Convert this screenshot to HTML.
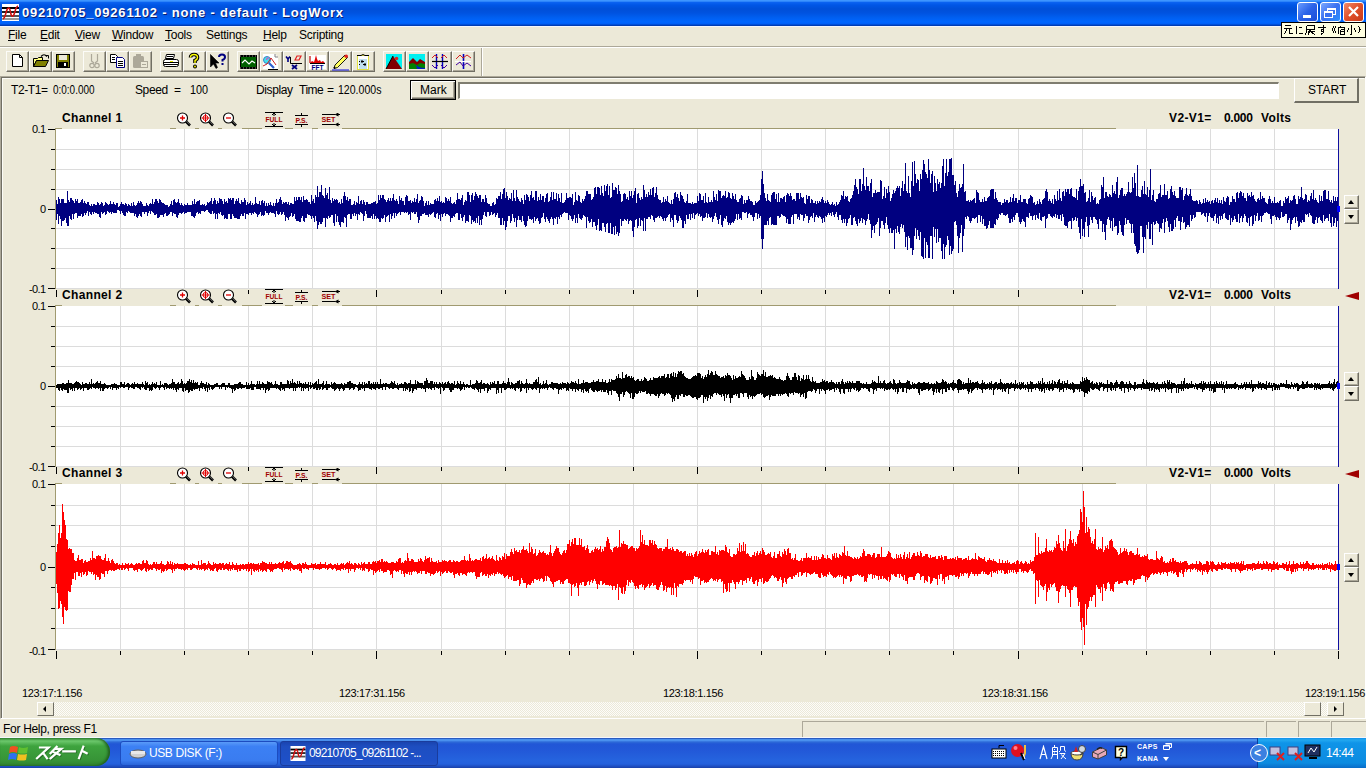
<!DOCTYPE html>
<html><head><meta charset="utf-8">
<style>
*{box-sizing:border-box;margin:0;padding:0}
html,body{width:1366px;height:768px;overflow:hidden;background:#ece9d8;font-family:"Liberation Sans",sans-serif;font-size:12px;color:#000;position:relative}
.a{position:absolute}
.t{position:absolute;white-space:nowrap;line-height:1}
#title{left:0;top:0;width:1366px;height:26px;background:linear-gradient(#3d95ff 0,#3d95ff 1px,#0a62f0 2.5px,#0056e6 5px,#004fd8 9px,#0053e0 13px,#0060f2 18px,#0066ff 22px,#005ef4 24px,#0040c0 25px,#003aa8 26px)}
#title .tt{left:22px;top:6px;color:#fff;font-weight:bold;font-size:13px;letter-spacing:0.8px;text-shadow:1px 1px 0 #0a1d72}
.tbtn{position:absolute;top:2px;width:21px;height:20px;border:1px solid #fff;border-radius:3px;background:linear-gradient(135deg,#6a9cff,#2a62e8 50%,#1c4ed8)}
.menu .t{top:29px;font-size:12px;letter-spacing:-0.25px}
.u{text-decoration:underline}
.btn{position:absolute;top:51px;width:23px;height:21px;border-top:1px solid #fcfcf8;border-left:1px solid #fcfcf8;border-right:1px solid #716f64;border-bottom:1px solid #716f64;box-shadow:inset -1px -1px 0 #aca899}
.ico{position:absolute;left:3px;top:2px}
.gl{position:absolute;background:#d8d8d8}
.ylab{position:absolute;font-size:11px;text-align:right;width:30.6px;line-height:1;letter-spacing:-0.6px}
.chh{position:absolute;font-weight:bold;font-size:12px;line-height:1;letter-spacing:0.35px}
.vv{position:absolute;font-weight:bold;font-size:12px;line-height:1;left:1168px}
.mg{position:absolute}
</style></head><body>
<!-- title bar -->
<div id="title" class="a">
  <svg class="a" style="left:2px;top:4px" width="17" height="17" viewBox="0 0 17 17"><rect width="17" height="17" fill="#fff"/><rect y="3" width="17" height="2" fill="#000"/><rect y="7" width="17" height="2" fill="#222"/><rect y="11" width="17" height="2" fill="#555"/><rect y="14" width="17" height="2" fill="#999"/><path d="M1 15 C4 14 4 3 7 4 C9 5 8 13 11 12 C13 11 13 3 16 2" stroke="#d01010" stroke-width="1.6" fill="none"/></svg>
  <div class="t tt">09210705_09261102 - none - default - LogWorx</div>
  <div class="tbtn" style="left:1297px"><div class="a" style="left:5px;top:12px;width:8px;height:3px;background:#fff"></div></div>
  <div class="tbtn" style="left:1320px;background:linear-gradient(135deg,#7aa8ff,#3a70f0 50%,#2a90ff)"><div class="a" style="left:6px;top:5px;width:9px;height:7px;border:1px solid #fff;border-top-width:2px"></div><div class="a" style="left:3px;top:8px;width:9px;height:7px;border:1px solid #fff;border-top-width:2px;background:#3a70f0"></div></div>
  <div class="tbtn" style="left:1343px;background:linear-gradient(135deg,#f08a6a,#e0502a 50%,#c83a1a)"><svg class="a" style="left:3px;top:3px" width="13" height="12"><path d="M2 1 L11 10 M11 1 L2 10" stroke="#fff" stroke-width="2.2"/></svg></div>
</div>
<div class="a" style="left:0;top:26px;width:1366px;height:1px;background:#f4f6fc"></div>
<!-- tooltip -->
<div class="a" style="left:1281px;top:22px;width:85px;height:16px;background:#ffffe1;border:1px solid #000"></div><svg class="a" style="left:0;top:0" width="1366" height="40"><path d="M1285 25.5H1291M1284 28.5H1292M1287 29L1284.5 34M1289.5 29V33.5H1292.5 M1296.5 26V34M1299 27.5H1302M1299 33.5H1303 M1306.5 25.5H1314.5V29.5H1306.5V25.5M1306.5 29.5V32L1305 34.5M1308 31.5H1314.5M1310.5 29.5L1308 34.5M1311 32L1315 34.5 M1318 27.5H1326M1323.5 25V32.5L1321 34.5M1321.5 29.5H1323.5V31.5H1321.5Z M1334 26L1332.5 29.5L1334 33M1336 26L1334.5 29.5L1336 33 M1340 25.5V27M1337.5 27.5H1344.5V29M1338.5 28V34M1340.5 29.5V34.5M1341 29.5H1344V34H1341M1341 31.5H1344 M1351.5 25V34L1350 34.5M1348.5 28.5L1347 32M1354 28L1356 31.5 M1358.5 26L1360 29.5L1358.5 33" stroke="#000" stroke-width="1" fill="none" shape-rendering="crispEdges"/></svg>

<!-- menu -->
<div class="menu">
  <div class="t" style="left:8px"><span class="u">F</span>ile</div>
  <div class="t" style="left:40px"><span class="u">E</span>dit</div>
  <div class="t" style="left:75px"><span class="u">V</span>iew</div>
  <div class="t" style="left:112px"><span class="u">W</span>indow</div>
  <div class="t" style="left:165px"><span class="u">T</span>ools</div>
  <div class="t" style="left:206px">Settings</div>
  <div class="t" style="left:263px"><span class="u">H</span>elp</div>
  <div class="t" style="left:299px">Scripting</div>
</div>
<div class="a" style="left:0;top:46px;width:1366px;height:1px;background:#aca899"></div>
<div class="a" style="left:0;top:47px;width:1366px;height:1px;background:#fff"></div>

<!-- toolbar -->
<div class="btn" style="left:6px"><svg class="a" style="left:0;top:0" width="21" height="19" viewBox="0 0 21 19"><path d="M5.5 2.5H12.5L15.5 5.5V14.5H5.5Z" fill="#fff" stroke="#000"/><path d="M12.5 2.5V5.5H15.5" fill="none" stroke="#000"/></svg></div>
<div class="btn" style="left:29px"><svg class="a" style="left:0;top:0" width="21" height="19" viewBox="0 0 21 19"><path d="M3.5 6.5H7.5L8.5 5.5H12.5V8.5H6.5L3.5 14.5Z" fill="#ffff80" stroke="#000"/><path d="M3.5 14.5L6.5 8.5H18.5L15.5 14.5Z" fill="#808000" stroke="#000"/><path d="M11 4.5 Q14 1 17 4.5" stroke="#000" fill="none" stroke-width="1.2"/><path d="M15.5 3.5H18.5V6.5" stroke="#000" fill="none"/></svg></div>
<div class="btn" style="left:52px"><svg class="a" style="left:0;top:0" width="21" height="19" viewBox="0 0 21 19"><rect x="3.5" y="2.5" width="13" height="13" fill="#808000" stroke="#000"/><rect x="6" y="3" width="8" height="5" fill="#ece9d8"/><rect x="5" y="10" width="10" height="5" fill="#000"/><rect x="11" y="11" width="2" height="3" fill="#fff"/></svg></div>
<div class="btn" style="left:83px"><svg class="a" style="left:0;top:0" width="21" height="19" viewBox="0 0 21 19"><path d="M7.5 2V9L10 11M13.5 2V9L11 11" stroke="#aca899" stroke-width="1.2" fill="none"/><circle cx="8" cy="13.5" r="2.2" fill="none" stroke="#aca899" stroke-width="1.2"/><circle cx="13" cy="13.5" r="2.2" fill="none" stroke="#aca899" stroke-width="1.2"/></svg></div>
<div class="btn" style="left:106px"><svg class="a" style="left:0;top:0" width="21" height="19" viewBox="0 0 21 19"><path d="M3.5 2.5H8.5L10.5 4.5V10.5H3.5Z" fill="#fff" stroke="#000"/><path d="M5 5.5H8M5 7.5H8" stroke="#000"/><path d="M9.5 5.5H15.5L17.5 7.5V15.5H9.5Z" fill="#fff" stroke="#000080"/><path d="M11 9.5H16M11 11.5H16M11 13.5H16" stroke="#000"/></svg></div>
<div class="btn" style="left:129px"><svg class="a" style="left:0;top:0" width="21" height="19" viewBox="0 0 21 19"><rect x="3" y="4" width="11" height="12" rx="1.5" fill="#aca899"/><rect x="6" y="2" width="5" height="3" fill="#aca899"/><rect x="10.5" y="9.5" width="7" height="6" fill="#ece9d8" stroke="#aca899"/><path d="M12 12.5H16" stroke="#aca899"/></svg></div>
<div class="btn" style="left:160px"><svg class="a" style="left:0;top:0" width="21" height="19" viewBox="0 0 21 19"><path d="M5.5 2.5H13.5L12.5 6.5H4.5Z" fill="#fff" stroke="#000"/><path d="M6 4.5H12" stroke="#000"/><rect x="2.5" y="7.5" width="15" height="7" rx="2" fill="#fff" stroke="#000"/><path d="M3 10.5H17M3 12.5H17" stroke="#000"/><rect x="9" y="9" width="3" height="1" fill="#e0e000"/></svg></div>
<div class="btn" style="left:183px"><svg class="a" style="left:0;top:0" width="21" height="19" viewBox="0 0 21 19"><path d="M6.5 5.5 Q6.5 2.5 10 2.5 Q13.5 2.5 13.5 5.5 Q13.5 7.5 11 8.5 V11" stroke="#000" stroke-width="3.6" fill="none"/><path d="M6.5 5.5 Q6.5 2.5 10 2.5 Q13.5 2.5 13.5 5.5 Q13.5 7.5 11 8.5 V11" stroke="#ffff00" stroke-width="1.4" fill="none"/><circle cx="11" cy="14.5" r="2" fill="#000"/><circle cx="11" cy="14.5" r="0.9" fill="#ffff00"/></svg></div>
<div class="btn" style="left:206px"><svg class="a" style="left:0;top:0" width="21" height="19" viewBox="0 0 21 19"><path d="M3.5 2.5V15L6.5 12L9 16.5L10.5 15.5L8.5 11H12Z" fill="#000" stroke="#000" stroke-width="0.6"/><path d="M12 5 Q12 2.5 15 2.5 Q18 2.5 18 5 Q18 7 15.5 8 V9.5" stroke="#000080" stroke-width="2" fill="none"/><rect x="14.5" y="11" width="2" height="2" fill="#000080"/></svg></div>
<div class="btn" style="left:237px"><svg class="a" style="left:0;top:0" width="21" height="19" viewBox="0 0 21 19"><rect x="2" y="3" width="17" height="14" fill="#000"/><rect x="3" y="5" width="15" height="10" fill="#006000"/><path d="M2 4H19M2 16H19" stroke="#ece9d8" stroke-width="0.6" stroke-dasharray="1 2"/><path d="M4 11 L7 8 L11 12 L14 9 L17 11" stroke="#fff" stroke-width="1.2" fill="none"/></svg></div>
<div class="btn" style="left:260px"><svg class="a" style="left:0;top:0" width="21" height="19" viewBox="0 0 21 19"><path d="M2 2H14L17 5V17H2Z" fill="#fff"/><path d="M14 2V5H17" stroke="#808080" fill="none"/><circle cx="6" cy="8" r="3.5" fill="#40e0f0" stroke="#4080c0"/><path d="M5.5 8 A2 2 0 0 1 8 6" stroke="#c060c0" fill="none" stroke-width="1.3"/><path d="M2 14 L6 12 L10 6 L15 13" stroke="#d02020" fill="none"/><path d="M8 11 L13 16" stroke="#3060d0" stroke-width="2.2"/><path d="M7 17.5H17" stroke="#000"/></svg></div>
<div class="btn" style="left:283px"><svg class="a" style="left:0;top:0" width="21" height="19" viewBox="0 0 21 19"><path d="M2 4.5L4 7M6 4.5L4 7V10" stroke="#000080" stroke-width="1.6" fill="none"/><path d="M6.5 5V11.5H18" stroke="#000" fill="none"/><path d="M8 13L13 17M13 13L8 17" stroke="#000080" stroke-width="1.8"/><path d="M11 8 L13 4 H17 L15 8Z" fill="none" stroke="#e02020" stroke-width="1.2"/></svg></div>
<div class="btn" style="left:306px"><svg class="a" style="left:0;top:0" width="21" height="19" viewBox="0 0 21 19"><rect x="2" y="3" width="17" height="14" fill="#fff"/><path d="M3 11V4" stroke="#c00000" stroke-width="1.2"/><path d="M3 11 L5 9 L7 10 L8 7 L9 3 L10 7 L11 9 L13 8 L14 10 L16 9 L18 11Z" fill="#e00000"/><path d="M3 11.5H18" stroke="#000"/><text x="10.5" y="17.5" font-family="Liberation Sans" font-weight="bold" font-size="6.5" fill="#000080" text-anchor="middle" textLength="12" lengthAdjust="spacingAndGlyphs">FFT</text></svg></div>
<div class="btn" style="left:329px"><svg class="a" style="left:0;top:0" width="21" height="19" viewBox="0 0 21 19"><path d="M5 13 L15 3 L17.5 5.5 L7.5 15.5 L4 16.5Z" fill="#ffff60" stroke="#000" stroke-width="0.9"/><circle cx="16.2" cy="4.2" r="1.8" fill="#e02020"/><path d="M4 15 L5 16.5" stroke="#000" stroke-width="1.5"/><path d="M2 18H19" stroke="#3030e0" stroke-width="1.2"/></svg></div>
<div class="btn" style="left:352px"><svg class="a" style="left:0;top:0" width="21" height="19" viewBox="0 0 21 19"><rect x="4.5" y="3.5" width="11" height="14" fill="#fff" stroke="#e0e040"/><path d="M4 3.5H8 Q10 1.5 12 3.5H16" stroke="#000" fill="none"/><path d="M6 8H14M6 10H14M6 12H14M6 14H14M6 16H14" stroke="#80c0e0"/><path d="M6 9.5H14M6 12.5H14" stroke="#000" stroke-dasharray="1 3"/><rect x="8" y="8.5" width="2" height="2" fill="#000"/><rect x="11" y="11.5" width="2" height="2" fill="#000"/></svg></div>
<div class="btn" style="left:383px"><svg class="a" style="left:0;top:0" width="21" height="19" viewBox="0 0 21 19"><rect x="2" y="2" width="16" height="15" fill="#00f0f0"/><path d="M2 17 L9 4 L18 17Z" fill="#800000"/><path d="M2 17 L9 4" stroke="#000" stroke-width="1"/><circle cx="12.5" cy="6.5" r="1.8" fill="#e02020"/></svg></div>
<div class="btn" style="left:406px"><svg class="a" style="left:0;top:0" width="21" height="19" viewBox="0 0 21 19"><rect x="2" y="2" width="16" height="15" fill="#00f0f0"/><path d="M2 10 L6 6 L10 10 L13 7 L18 10 V17 H2Z" fill="#800000"/><path d="M2 12 L6 11 L10 13 L13 11 L18 12 V17 H2Z" fill="#008000"/><path d="M9 13 Q12 16 18 16 V17 H10Z" fill="#0020c0"/></svg></div>
<div class="btn" style="left:429px"><svg class="a" style="left:0;top:0" width="21" height="19" viewBox="0 0 21 19"><path d="M6.5 2V17M12.5 2V17" stroke="#0000c0" stroke-width="1.4"/><path d="M2 9.5H18" stroke="#000" stroke-width="1.2"/><path d="M2 6 L5 3 L8 6 M11 6 L14 3 L17 6" stroke="#d02020" fill="none"/><path d="M2 13 L5 16 L8 13 M11 13 L14 16 L17 13" stroke="#4000a0" fill="none"/></svg></div>
<div class="btn" style="left:452px"><svg class="a" style="left:0;top:0" width="21" height="19" viewBox="0 0 21 19"><path d="M10.5 2V17" stroke="#0000c0" stroke-width="1.6"/><path d="M2 9.5H18" stroke="#fff" stroke-width="1.2"/><path d="M3 7 L7 3 L10 6 L14 3 L18 6" stroke="#d02020" fill="none"/><path d="M3 13 L7 10 L10 14 L14 11 L18 14" stroke="#4000a0" fill="none"/></svg></div>
<div class="a" style="left:481px;top:48px;width:1px;height:28px;background:#aca899"></div>
<div class="a" style="left:482px;top:48px;width:1px;height:28px;background:#fff"></div>

<!-- panel border -->
<div class="a" style="left:0;top:76px;width:1366px;height:643px;border-top:1px solid #aca899;border-left:1px solid #aca899;border-right:1px solid #fff;border-bottom:1px solid #fff"></div>
<div class="a" style="left:1px;top:77px;width:1364px;height:641px;border-top:1px solid #716f64;border-left:1px solid #716f64"></div>
<div class="a" style="left:2px;top:78px;width:1362px;height:640px;border-top:1px solid #fbfbf6;border-left:1px solid #fbfbf6"></div>

<!-- info row -->
<div class="t" style="left:11px;top:84px;letter-spacing:-0.4px">T2-T1=</div>
<div class="t" style="left:53px;top:84px;transform:scaleX(0.83);transform-origin:0 0">0:0:0.000</div>
<div class="t" style="left:135px;top:84px;letter-spacing:-0.4px">Speed</div>
<div class="t" style="left:174px;top:84px">=</div>
<div class="t" style="left:190px;top:84px;transform:scaleX(0.9);transform-origin:0 0">100</div>
<div class="t" style="left:256px;top:84px;letter-spacing:-0.4px">Display</div>
<div class="t" style="left:299px;top:84px;letter-spacing:-0.5px">Time</div>
<div class="t" style="left:327px;top:84px">=</div>
<div class="t" style="left:338px;top:84px;transform:scaleX(0.88);transform-origin:0 0">120.000s</div>
<div class="a" style="left:410px;top:80px;width:46px;height:20px;border:1px solid #000;background:#ece9d8;box-shadow:inset 1px 1px 0 #fff,inset -1px -1px 0 #716f64,inset -2px -2px 0 #aca899"></div>
<div class="t" style="left:420px;top:84px">Mark</div>
<div class="a" style="left:458px;top:82px;width:821px;height:17px;background:#fff;border-top:2px solid #7f7d70;border-left:2px solid #7f7d70;border-right:1px solid #fff;border-bottom:1px solid #fff"></div>
<div class="a" style="left:1294px;top:78px;width:65px;height:25px;background:#ece9d8;border-top:1px solid #fff;border-left:1px solid #fff;border-right:2px solid #716f64;border-bottom:2px solid #716f64"></div>
<div class="t" style="left:1308px;top:84px">START</div>

<div class="a" style="left:56px;top:129px;width:1283px;height:160px;background:#fff"></div>
<svg class="a" style="left:0;top:0" width="1366" height="768"><rect x="56" y="149" width="1282" height="1" fill="#dcdcdc"/><rect x="56" y="169" width="1282" height="1" fill="#dcdcdc"/><rect x="56" y="189" width="1282" height="1" fill="#dcdcdc"/><rect x="56" y="209" width="1282" height="1" fill="#dcdcdc"/><rect x="56" y="228" width="1282" height="1" fill="#dcdcdc"/><rect x="56" y="248" width="1282" height="1" fill="#dcdcdc"/><rect x="56" y="268" width="1282" height="1" fill="#dcdcdc"/><rect x="56" y="288" width="1282" height="1" fill="#dcdcdc"/><rect x="120" y="129" width="1" height="160" fill="#dcdcdc"/><rect x="184" y="129" width="1" height="160" fill="#dcdcdc"/><rect x="248" y="129" width="1" height="160" fill="#dcdcdc"/><rect x="312" y="129" width="1" height="160" fill="#dcdcdc"/><rect x="376" y="129" width="1" height="160" fill="#dcdcdc"/><rect x="441" y="129" width="1" height="160" fill="#dcdcdc"/><rect x="505" y="129" width="1" height="160" fill="#dcdcdc"/><rect x="569" y="129" width="1" height="160" fill="#dcdcdc"/><rect x="633" y="129" width="1" height="160" fill="#dcdcdc"/><rect x="697" y="129" width="1" height="160" fill="#dcdcdc"/><rect x="761" y="129" width="1" height="160" fill="#dcdcdc"/><rect x="825" y="129" width="1" height="160" fill="#dcdcdc"/><rect x="889" y="129" width="1" height="160" fill="#dcdcdc"/><rect x="953" y="129" width="1" height="160" fill="#dcdcdc"/><rect x="1018" y="129" width="1" height="160" fill="#dcdcdc"/><rect x="1082" y="129" width="1" height="160" fill="#dcdcdc"/><rect x="1146" y="129" width="1" height="160" fill="#dcdcdc"/><rect x="1210" y="129" width="1" height="160" fill="#dcdcdc"/><rect x="1274" y="129" width="1" height="160" fill="#dcdcdc"/><rect x="55" y="128" width="1" height="161" fill="#a09a70"/><rect x="48" y="129" width="7" height="1" fill="#000"/><rect x="51" y="149" width="4" height="1" fill="#000"/><rect x="51" y="169" width="4" height="1" fill="#000"/><rect x="51" y="189" width="4" height="1" fill="#000"/><rect x="48" y="209" width="7" height="1" fill="#000"/><rect x="51" y="228" width="4" height="1" fill="#000"/><rect x="51" y="248" width="4" height="1" fill="#000"/><rect x="51" y="268" width="4" height="1" fill="#000"/><rect x="48" y="288" width="7" height="1" fill="#000"/><path d="M56.5 200.2V220.1M57.5 204.0V214.3M58.5 196.9V223.8M59.5 199.2V215.8M60.5 202.5V219.0M61.5 199.4V226.0M62.5 198.5V220.6M63.5 198.9V221.4M64.5 202.6V219.7M65.5 202.8V217.5M66.5 203.0V222.8M67.5 191.0V226.0M68.5 199.7V226.0M69.5 201.9V215.9M70.5 198.4V218.5M71.5 198.1V220.4M72.5 199.6V214.1M73.5 201.4V218.5M74.5 203.3V214.2M75.5 198.6V212.9M76.5 200.6V212.8M77.5 199.4V218.4M78.5 203.0V215.6M79.5 203.3V216.0M80.5 201.8V215.5M81.5 200.2V214.1M82.5 199.2V216.9M83.5 203.1V215.5M84.5 200.7V213.4M85.5 203.4V214.7M86.5 203.8V212.7M87.5 202.0V211.4M88.5 201.6V215.5M89.5 205.4V212.3M90.5 205.6V214.1M91.5 204.4V214.8M92.5 205.7V211.7M93.5 204.1V214.0M94.5 203.9V211.7M95.5 204.6V213.2M96.5 205.2V212.8M97.5 201.6V214.4M98.5 203.4V213.5M99.5 205.1V216.9M100.5 203.8V217.8M101.5 202.0V212.4M102.5 202.8V214.0M103.5 205.5V213.3M104.5 205.2V212.3M105.5 201.6V214.7M106.5 202.6V214.0M107.5 203.9V211.3M108.5 204.6V212.1M109.5 203.8V212.6M110.5 201.2V211.8M111.5 203.6V214.3M112.5 203.5V211.9M113.5 201.8V212.7M114.5 204.4V213.3M115.5 205.2V213.0M116.5 202.7V212.6M117.5 203.4V210.2M118.5 206.6V210.3M119.5 206.2V210.6M120.5 203.8V213.8M121.5 202.4V210.8M122.5 204.4V212.8M123.5 203.8V215.3M124.5 205.1V216.3M125.5 202.9V215.5M126.5 203.9V212.4M127.5 205.9V213.2M128.5 204.0V211.4M129.5 205.1V212.3M130.5 205.8V213.2M131.5 202.6V213.1M132.5 205.6V213.0M133.5 201.5V212.5M134.5 205.4V215.9M135.5 206.0V214.4M136.5 205.1V217.3M137.5 203.4V217.5M138.5 201.3V215.5M139.5 203.3V214.2M140.5 200.9V215.5M141.5 202.2V216.6M142.5 203.5V211.9M143.5 206.4V212.0M144.5 206.4V214.0M145.5 205.6V212.3M146.5 202.5V212.2M147.5 204.5V215.8M148.5 206.3V212.6M149.5 204.2V210.6M150.5 203.1V213.5M151.5 203.7V211.4M152.5 199.3V211.9M153.5 203.9V213.2M154.5 201.6V214.8M155.5 199.3V214.7M156.5 199.4V213.7M157.5 200.5V217.7M158.5 203.4V217.7M159.5 199.3V216.8M160.5 199.7V215.2M161.5 201.6V214.6M162.5 202.8V215.1M163.5 202.5V216.5M164.5 204.3V214.3M165.5 204.5V213.2M166.5 204.9V215.8M167.5 204.6V216.0M168.5 206.5V214.7M169.5 205.8V213.9M170.5 203.9V212.0M171.5 201.1V212.1M172.5 205.0V215.7M173.5 199.9V212.6M174.5 199.0V213.8M175.5 202.3V214.0M176.5 202.8V216.6M177.5 202.2V218.0M178.5 199.0V214.9M179.5 202.6V213.2M180.5 205.2V212.5M181.5 202.6V213.5M182.5 205.3V213.2M183.5 205.9V212.4M184.5 203.6V214.1M185.5 205.0V213.4M186.5 205.1V213.0M187.5 202.7V211.9M188.5 205.2V212.0M189.5 205.4V212.1M190.5 205.3V212.2M191.5 205.4V215.7M192.5 200.9V215.6M193.5 204.2V216.5M194.5 199.2V218.4M195.5 204.0V216.2M196.5 202.1V213.4M197.5 201.3V212.0M198.5 201.2V213.9M199.5 199.6V212.6M200.5 205.0V213.6M201.5 204.8V210.9M202.5 203.8V211.1M203.5 205.1V211.1M204.5 203.6V211.6M205.5 206.2V210.9M206.5 205.4V210.1M207.5 201.5V210.3M208.5 202.5V212.4M209.5 201.9V213.3M210.5 201.0V214.4M211.5 198.3V214.1M212.5 204.2V210.8M213.5 201.3V213.6M214.5 198.2V212.9M215.5 200.1V218.8M216.5 203.7V213.7M217.5 200.9V218.9M218.5 203.0V212.7M219.5 198.1V214.3M220.5 198.9V212.2M221.5 198.9V214.6M222.5 200.9V215.8M223.5 204.0V215.0M224.5 199.4V219.0M225.5 202.0V217.8M226.5 200.7V219.0M227.5 202.5V218.6M228.5 197.9V213.7M229.5 198.8V213.9M230.5 197.9V219.1M231.5 199.7V219.2M232.5 197.8V214.1M233.5 197.8V216.3M234.5 203.6V218.2M235.5 201.3V217.8M236.5 198.6V217.5M237.5 200.7V219.3M238.5 197.7V219.3M239.5 203.0V219.3M240.5 204.0V215.6M241.5 199.9V213.8M242.5 202.2V216.1M243.5 202.4V215.8M244.5 197.5V212.8M245.5 200.0V219.0M246.5 204.7V213.5M247.5 202.4V214.3M248.5 204.3V214.9M249.5 202.6V213.4M250.5 201.1V212.6M251.5 204.5V215.0M252.5 203.4V213.3M253.5 204.7V213.7M254.5 203.9V212.4M255.5 197.2V212.6M256.5 203.3V214.1M257.5 204.2V216.7M258.5 204.3V214.8M259.5 200.8V214.4M260.5 204.9V212.4M261.5 200.5V215.8M262.5 200.0V214.6M263.5 202.8V215.9M264.5 201.2V215.3M265.5 205.6V211.4M266.5 203.3V212.6M267.5 205.5V212.7M268.5 203.2V214.5M269.5 205.1V213.1M270.5 201.9V211.8M271.5 204.6V213.3M272.5 205.7V213.0M273.5 203.1V212.6M274.5 205.9V213.8M275.5 203.1V216.8M276.5 199.3V211.2M277.5 203.2V214.1M278.5 201.6V215.0M279.5 198.6V214.4M280.5 197.1V211.5M281.5 200.4V215.0M282.5 203.9V213.9M283.5 202.2V212.4M284.5 203.2V214.7M285.5 201.9V220.7M286.5 201.7V216.7M287.5 203.6V217.9M288.5 201.9V220.2M289.5 204.7V217.1M290.5 202.9V216.0M291.5 202.7V213.4M292.5 204.2V216.9M293.5 203.8V216.4M294.5 196.8V214.2M295.5 201.1V219.4M296.5 196.9V221.3M297.5 200.1V221.4M298.5 196.6V221.4M299.5 197.2V221.5M300.5 199.9V221.5M301.5 197.3V218.3M302.5 202.0V216.3M303.5 195.5V221.0M304.5 200.4V221.8M305.5 199.8V217.8M306.5 198.5V218.1M307.5 199.7V213.6M308.5 201.8V214.8M309.5 202.0V215.3M310.5 203.5V216.0M311.5 194.8V219.1M312.5 201.3V215.6M313.5 198.7V218.3M314.5 202.5V221.6M315.5 194.5V215.8M316.5 196.8V220.7M317.5 186.4V229.4M318.5 197.2V224.8M319.5 191.5V221.8M320.5 192.4V223.9M321.5 185.0V223.8M322.5 195.1V222.3M323.5 196.2V217.7M324.5 197.9V217.8M325.5 187.5V227.1M326.5 194.8V217.9M327.5 192.7V218.8M328.5 198.5V215.7M329.5 187.3V218.3M330.5 200.4V217.1M331.5 202.9V214.9M332.5 197.8V215.3M333.5 200.7V223.0M334.5 199.1V225.6M335.5 199.5V213.7M336.5 198.5V222.0M337.5 200.0V215.8M338.5 202.9V221.6M339.5 201.5V224.8M340.5 203.5V227.1M341.5 199.3V221.5M342.5 202.8V222.3M343.5 196.2V223.1M344.5 191.8V217.1M345.5 195.7V218.2M346.5 200.1V226.7M347.5 197.2V214.9M348.5 200.7V214.2M349.5 198.8V214.1M350.5 198.7V218.7M351.5 204.5V219.4M352.5 204.8V213.5M353.5 204.2V215.5M354.5 200.8V213.4M355.5 205.3V215.6M356.5 201.6V213.7M357.5 203.0V220.1M358.5 196.4V214.0M359.5 204.1V215.2M360.5 200.7V212.0M361.5 199.7V212.8M362.5 203.8V213.6M363.5 199.7V221.1M364.5 201.7V216.1M365.5 205.2V211.4M366.5 202.2V214.2M367.5 201.7V217.8M368.5 203.5V218.0M369.5 203.9V218.2M370.5 203.6V218.2M371.5 203.0V216.3M372.5 203.4V218.6M373.5 201.6V214.0M374.5 201.7V218.9M375.5 201.2V216.3M376.5 203.8V218.5M377.5 202.7V218.0M378.5 194.8V219.2M379.5 200.3V221.9M380.5 195.3V222.2M381.5 198.4V218.0M382.5 194.7V218.6M383.5 194.6V217.9M384.5 199.3V215.4M385.5 200.4V221.6M386.5 201.8V217.0M387.5 199.9V215.9M388.5 197.5V215.0M389.5 200.9V221.9M390.5 197.9V214.1M391.5 200.7V219.3M392.5 197.9V215.6M393.5 194.2V213.4M394.5 199.5V218.2M395.5 201.3V212.8M396.5 199.4V215.7M397.5 200.9V214.3M398.5 204.1V213.0M399.5 196.3V212.2M400.5 200.1V215.4M401.5 197.8V212.1M402.5 201.1V211.7M403.5 201.3V211.8M404.5 204.8V213.0M405.5 196.8V212.4M406.5 195.3V213.4M407.5 196.4V212.0M408.5 200.6V214.8M409.5 201.3V214.4M410.5 200.2V219.5M411.5 203.0V212.4M412.5 200.5V213.0M413.5 201.6V211.8M414.5 198.4V213.9M415.5 201.6V213.7M416.5 199.0V212.1M417.5 194.1V216.5M418.5 202.5V222.9M419.5 200.6V219.7M420.5 199.8V216.4M421.5 196.4V215.5M422.5 196.7V213.5M423.5 200.5V214.2M424.5 205.5V212.5M425.5 203.1V215.3M426.5 201.0V215.0M427.5 204.5V214.9M428.5 200.7V217.3M429.5 204.6V214.1M430.5 202.7V215.1M431.5 204.1V213.9M432.5 204.2V213.3M433.5 204.3V212.4M434.5 199.6V216.5M435.5 198.8V217.7M436.5 201.2V213.8M437.5 198.0V212.5M438.5 200.8V219.0M439.5 195.8V215.4M440.5 201.9V221.3M441.5 200.6V213.5M442.5 203.0V216.8M443.5 202.4V213.7M444.5 203.2V212.8M445.5 196.6V215.7M446.5 197.7V214.1M447.5 201.1V213.7M448.5 198.8V215.1M449.5 200.9V216.3M450.5 197.3V222.4M451.5 203.0V217.7M452.5 203.8V217.7M453.5 202.6V216.4M454.5 202.1V217.0M455.5 204.1V213.5M456.5 200.3V213.0M457.5 193.2V212.6M458.5 199.3V220.1M459.5 199.0V219.5M460.5 199.6V213.7M461.5 197.7V218.1M462.5 195.3V220.7M463.5 204.6V216.5M464.5 202.1V214.9M465.5 199.7V222.9M466.5 200.6V220.6M467.5 192.2V221.1M468.5 192.2V221.5M469.5 194.6V215.0M470.5 201.5V216.2M471.5 195.1V224.0M472.5 192.8V220.2M473.5 199.5V221.6M474.5 196.0V221.0M475.5 192.2V222.8M476.5 193.7V218.3M477.5 195.9V223.4M478.5 197.9V215.7M479.5 194.8V224.8M480.5 194.8V219.6M481.5 201.7V224.5M482.5 199.1V219.3M483.5 198.9V215.2M484.5 202.4V211.7M485.5 194.8V215.7M486.5 197.7V216.8M487.5 203.0V212.3M488.5 203.9V211.9M489.5 204.0V216.2M490.5 206.0V214.9M491.5 206.0V212.0M492.5 203.1V215.1M493.5 202.2V213.6M494.5 204.6V212.8M495.5 203.9V217.2M496.5 198.4V214.6M497.5 198.6V212.9M498.5 195.9V217.5M499.5 196.1V218.1M500.5 191.6V225.4M501.5 199.2V224.8M502.5 193.5V218.0M503.5 189.0V225.0M504.5 188.1V221.4M505.5 197.8V229.6M506.5 191.6V226.8M507.5 196.3V221.0M508.5 200.4V216.2M509.5 198.1V215.7M510.5 199.4V223.0M511.5 193.1V221.1M512.5 200.5V214.4M513.5 190.0V217.7M514.5 197.9V221.9M515.5 200.9V218.3M516.5 189.8V227.2M517.5 197.2V220.4M518.5 198.9V215.9M519.5 201.3V219.7M520.5 202.3V220.0M521.5 197.9V222.4M522.5 200.0V215.7M523.5 203.5V221.4M524.5 195.1V224.6M525.5 200.4V226.6M526.5 194.1V225.6M527.5 195.0V221.2M528.5 197.1V215.8M529.5 201.0V219.4M530.5 195.4V218.7M531.5 191.1V219.6M532.5 198.1V218.9M533.5 197.2V222.5M534.5 199.6V217.0M535.5 191.1V221.4M536.5 191.2V219.3M537.5 200.5V218.0M538.5 196.8V221.0M539.5 199.9V223.5M540.5 194.4V222.5M541.5 200.3V217.9M542.5 195.6V217.4M543.5 196.3V212.9M544.5 201.7V219.2M545.5 198.2V222.2M546.5 193.7V216.8M547.5 193.3V218.5M548.5 201.8V220.7M549.5 200.9V222.6M550.5 196.9V219.3M551.5 192.2V217.4M552.5 199.7V219.1M553.5 192.3V224.7M554.5 198.6V218.2M555.5 199.3V219.4M556.5 192.5V217.1M557.5 201.0V223.6M558.5 194.2V217.4M559.5 198.0V218.7M560.5 201.9V214.9M561.5 192.9V217.4M562.5 203.1V213.9M563.5 202.9V213.3M564.5 201.5V212.1M565.5 199.5V213.0M566.5 193.2V212.5M567.5 197.8V212.8M568.5 197.7V219.6M569.5 197.3V215.3M570.5 196.9V215.8M571.5 198.2V219.0M572.5 194.1V220.8M573.5 204.5V219.2M574.5 201.5V214.8M575.5 192.2V223.2M576.5 200.0V218.4M577.5 201.2V223.0M578.5 194.6V214.1M579.5 195.7V218.3M580.5 202.2V218.7M581.5 203.1V220.1M582.5 199.0V217.5M583.5 201.4V214.5M584.5 198.7V216.3M585.5 196.4V216.9M586.5 191.2V227.5M587.5 190.8V217.4M588.5 194.0V221.1M589.5 194.1V222.9M590.5 193.6V221.7M591.5 199.7V219.2M592.5 199.0V226.5M593.5 196.5V221.5M594.5 187.5V221.7M595.5 187.2V225.8M596.5 193.8V230.0M597.5 186.8V224.9M598.5 186.5V219.2M599.5 188.2V230.8M600.5 194.5V229.6M601.5 185.8V231.2M602.5 193.2V222.9M603.5 195.9V222.5M604.5 185.3V226.5M605.5 191.4V232.2M606.5 185.9V224.2M607.5 184.2V223.1M608.5 194.9V233.0M609.5 186.2V233.2M610.5 198.1V222.6M611.5 197.4V233.8M612.5 183.0V234.0M613.5 189.8V227.1M614.5 190.2V234.5M615.5 187.2V225.8M616.5 188.1V234.1M617.5 193.7V231.8M618.5 185.1V235.5M619.5 191.1V232.6M620.5 194.3V219.4M621.5 202.2V225.7M622.5 200.8V221.1M623.5 194.0V220.7M624.5 192.9V219.2M625.5 193.5V219.7M626.5 198.9V221.4M627.5 197.3V218.9M628.5 199.9V223.7M629.5 191.4V221.2M630.5 196.0V220.3M631.5 190.8V221.0M632.5 197.7V230.6M633.5 195.2V237.0M634.5 190.9V226.8M635.5 187.8V220.2M636.5 202.5V218.6M637.5 194.4V227.8M638.5 193.3V225.6M639.5 197.9V218.3M640.5 199.6V226.1M641.5 197.0V219.6M642.5 198.6V221.4M643.5 185.0V231.0M644.5 189.9V217.5M645.5 197.3V231.0M646.5 193.7V218.6M647.5 196.7V218.9M648.5 192.3V217.2M649.5 194.8V216.9M650.5 188.8V219.0M651.5 194.9V215.2M652.5 187.6V216.2M653.5 186.6V220.2M654.5 197.2V222.1M655.5 192.8V217.7M656.5 186.8V217.5M657.5 194.5V217.1M658.5 199.2V216.3M659.5 199.6V217.9M660.5 200.1V215.5M661.5 203.4V216.5M662.5 201.8V218.5M663.5 196.9V220.9M664.5 202.2V217.8M665.5 199.0V221.4M666.5 201.2V217.7M667.5 195.9V216.7M668.5 202.4V214.7M669.5 203.4V213.8M670.5 204.3V221.7M671.5 199.7V217.7M672.5 203.6V219.8M673.5 198.8V227.3M674.5 192.5V215.1M675.5 192.4V215.2M676.5 196.7V219.5M677.5 193.9V223.1M678.5 197.5V221.0M679.5 200.9V215.5M680.5 191.5V217.5M681.5 195.1V219.7M682.5 196.0V228.0M683.5 199.4V227.8M684.5 202.0V220.5M685.5 202.6V224.2M686.5 200.7V214.5M687.5 193.9V218.5M688.5 202.9V218.6M689.5 203.0V214.4M690.5 202.9V219.6M691.5 204.4V214.1M692.5 202.0V217.7M693.5 204.4V212.5M694.5 202.5V219.0M695.5 203.2V215.0M696.5 202.9V214.0M697.5 195.9V212.6M698.5 200.7V215.7M699.5 193.2V213.5M700.5 193.5V217.4M701.5 200.1V216.2M702.5 200.3V221.4M703.5 196.4V218.1M704.5 202.5V218.0M705.5 192.7V216.5M706.5 201.8V212.7M707.5 203.2V217.8M708.5 196.8V214.2M709.5 202.3V217.3M710.5 202.2V218.3M711.5 199.5V217.4M712.5 201.9V222.0M713.5 191.1V218.7M714.5 196.6V215.5M715.5 199.8V213.1M716.5 193.5V217.1M717.5 201.3V219.9M718.5 190.1V224.2M719.5 191.3V219.4M720.5 190.9V214.6M721.5 198.3V224.7M722.5 196.1V226.7M723.5 195.3V220.7M724.5 196.3V218.1M725.5 191.1V219.3M726.5 197.6V215.9M727.5 196.5V222.3M728.5 191.8V225.2M729.5 192.5V223.4M730.5 198.2V224.8M731.5 199.4V223.2M732.5 192.8V221.6M733.5 196.0V222.6M734.5 199.3V220.5M735.5 193.5V219.4M736.5 200.2V213.9M737.5 202.1V220.4M738.5 201.7V213.7M739.5 198.6V219.4M740.5 197.8V217.8M741.5 194.7V220.0M742.5 195.6V211.9M743.5 203.9V211.6M744.5 200.3V213.1M745.5 203.2V212.6M746.5 200.2V212.4M747.5 199.6V217.7M748.5 195.5V214.4M749.5 199.3V213.2M750.5 200.9V214.8M751.5 200.8V215.3M752.5 201.5V217.0M753.5 204.8V220.7M754.5 204.8V217.3M755.5 201.3V212.6M756.5 203.2V213.4M757.5 202.3V219.1M758.5 201.4V213.8M759.5 200.2V217.8M760.5 195.2V215.8M761.5 178.5V238.5M762.5 170.5V248.5M763.5 183.5V238.5M764.5 192.5V224.5M765.5 197.6V224.6M766.5 200.6V224.8M767.5 193.8V221.0M768.5 199.7V224.7M769.5 200.6V217.7M770.5 201.7V217.0M771.5 195.3V224.6M772.5 193.0V223.7M773.5 192.4V224.6M774.5 192.4V224.6M775.5 199.3V224.5M776.5 193.7V224.5M777.5 202.3V215.9M778.5 192.5V216.3M779.5 202.2V218.0M780.5 197.8V217.0M781.5 198.0V214.1M782.5 199.2V214.6M783.5 196.7V216.1M784.5 196.3V215.9M785.5 201.9V217.3M786.5 195.2V222.9M787.5 192.7V218.7M788.5 194.1V223.7M789.5 195.5V223.9M790.5 192.8V224.2M791.5 195.6V217.2M792.5 199.5V215.2M793.5 198.5V223.5M794.5 198.9V213.8M795.5 200.6V214.2M796.5 192.9V214.3M797.5 193.0V218.5M798.5 193.0V216.6M799.5 198.8V220.4M800.5 193.0V213.5M801.5 196.8V215.0M802.5 197.6V214.7M803.5 197.1V220.9M804.5 202.6V217.5M805.5 203.6V213.8M806.5 194.9V215.7M807.5 198.8V216.3M808.5 196.0V222.7M809.5 195.7V219.9M810.5 202.5V216.6M811.5 198.5V216.0M812.5 200.1V217.9M813.5 203.4V213.4M814.5 202.8V221.6M815.5 200.9V216.9M816.5 203.8V215.0M817.5 200.7V217.0M818.5 203.2V218.0M819.5 200.5V216.2M820.5 202.0V217.2M821.5 198.9V218.7M822.5 196.9V222.8M823.5 200.0V218.3M824.5 203.0V221.7M825.5 200.7V216.4M826.5 203.4V217.2M827.5 200.3V215.2M828.5 201.7V213.3M829.5 204.3V215.4M830.5 204.9V212.9M831.5 203.7V216.4M832.5 202.0V212.4M833.5 204.9V214.5M834.5 204.1V216.6M835.5 206.2V214.4M836.5 201.8V212.4M837.5 204.7V217.3M838.5 203.7V219.7M839.5 202.2V214.9M840.5 199.9V215.1M841.5 194.9V219.6M842.5 195.9V222.9M843.5 190.8V218.9M844.5 199.4V223.2M845.5 195.7V218.9M846.5 197.4V225.6M847.5 196.4V223.4M848.5 201.3V219.3M849.5 202.2V218.3M850.5 199.2V214.7M851.5 197.5V224.9M852.5 194.6V224.9M853.5 190.9V217.8M854.5 184.5V216.6M855.5 178.6V221.0M856.5 187.0V224.2M857.5 189.2V226.1M858.5 193.9V219.3M859.5 179.0V222.5M860.5 178.5V221.0M861.5 190.9V217.9M862.5 184.2V222.6M863.5 167.6V219.1M864.5 185.8V219.8M865.5 189.7V224.9M866.5 177.2V220.5M867.5 186.0V219.1M868.5 186.4V214.3M869.5 190.5V219.9M870.5 182.6V224.4M871.5 179.0V237.6M872.5 197.4V230.4M873.5 192.5V225.8M874.5 192.5V232.8M875.5 190.2V224.8M876.5 192.8V224.1M877.5 191.7V222.0M878.5 191.7V218.2M879.5 191.7V236.4M880.5 179.7V227.5M881.5 180.5V220.9M882.5 198.9V220.5M883.5 196.4V224.7M884.5 186.5V229.3M885.5 197.9V222.8M886.5 189.4V217.0M887.5 192.5V225.0M888.5 185.6V228.8M889.5 192.2V232.7M890.5 200.5V228.0M891.5 197.8V233.2M892.5 193.5V232.7M893.5 190.4V229.8M894.5 193.3V249.2M895.5 191.2V229.3M896.5 188.1V232.7M897.5 186.0V225.9M898.5 188.0V231.9M899.5 186.4V233.6M900.5 196.1V227.2M901.5 187.5V224.0M902.5 181.1V228.4M903.5 190.9V224.9M904.5 183.8V231.7M905.5 162.7V247.1M906.5 191.3V236.5M907.5 192.7V249.8M908.5 175.7V235.9M909.5 193.0V237.5M910.5 197.4V247.7M911.5 180.8V247.7M912.5 161.5V254.5M913.5 185.5V250.1M914.5 161.2V236.4M915.5 174.2V228.1M916.5 182.9V239.3M917.5 178.7V230.2M918.5 179.8V235.6M919.5 190.6V240.1M920.5 173.7V232.2M921.5 178.5V256.4M922.5 170.2V257.2M923.5 159.7V258.5M924.5 164.2V237.7M925.5 171.9V257.7M926.5 173.5V242.2M927.5 178.3V244.8M928.5 158.8V258.2M929.5 169.5V258.3M930.5 182.8V235.5M931.5 173.6V235.9M932.5 170.6V258.5M933.5 191.5V227.0M934.5 175.9V236.9M935.5 182.9V229.0M936.5 190.6V242.6M937.5 179.4V229.4M938.5 183.9V242.4M939.5 181.9V238.2M940.5 187.8V238.2M941.5 182.9V250.6M942.5 165.6V258.5M943.5 158.5V243.8M944.5 185.9V258.5M945.5 172.6V246.7M946.5 158.5V244.9M947.5 176.4V235.8M948.5 172.1V240.3M949.5 158.5V255.3M950.5 158.5V246.3M951.5 157.5V254.1M952.5 175.1V250.5M953.5 174.9V249.0M954.5 184.5V221.8M955.5 180.9V220.7M956.5 193.4V225.2M957.5 196.5V236.1M958.5 191.2V253.3M959.5 184.0V237.6M960.5 188.1V232.7M961.5 186.9V225.3M962.5 184.2V251.8M963.5 163.5V236.1M964.5 191.6V229.0M965.5 191.4V216.6M966.5 200.7V218.6M967.5 200.9V216.0M968.5 199.9V217.2M969.5 201.5V221.3M970.5 200.2V222.5M971.5 200.6V221.0M972.5 200.3V217.5M973.5 199.0V218.0M974.5 197.5V219.4M975.5 202.5V217.7M976.5 189.7V217.1M977.5 191.6V222.6M978.5 193.2V215.1M979.5 200.4V214.6M980.5 202.1V222.3M981.5 202.3V216.1M982.5 198.6V224.2M983.5 201.9V219.4M984.5 196.5V226.0M985.5 201.4V226.1M986.5 200.9V228.8M987.5 197.8V227.5M988.5 196.6V225.2M989.5 196.1V221.1M990.5 189.9V228.4M991.5 188.7V228.3M992.5 188.8V228.2M993.5 189.0V228.0M994.5 199.0V224.2M995.5 192.4V225.0M996.5 197.6V218.6M997.5 200.3V219.9M998.5 202.1V217.6M999.5 202.4V213.6M1000.5 202.3V214.7M1001.5 204.6V213.2M1002.5 202.7V213.4M1003.5 203.0V215.4M1004.5 199.2V215.3M1005.5 202.3V216.1M1006.5 199.7V215.0M1007.5 199.9V213.8M1008.5 203.0V217.9M1009.5 201.8V222.7M1010.5 197.4V222.6M1011.5 201.8V218.5M1012.5 197.8V221.6M1013.5 194.3V217.0M1014.5 201.4V219.7M1015.5 198.4V215.0M1016.5 198.0V213.1M1017.5 202.8V213.3M1018.5 200.3V217.0M1019.5 199.8V222.2M1020.5 195.2V223.9M1021.5 202.2V221.5M1022.5 201.9V218.6M1023.5 198.8V220.7M1024.5 198.9V222.3M1025.5 199.0V226.6M1026.5 202.6V217.1M1027.5 203.9V216.7M1028.5 198.6V217.8M1029.5 197.5V212.9M1030.5 195.2V215.9M1031.5 195.9V216.4M1032.5 197.4V220.3M1033.5 203.1V216.0M1034.5 202.1V214.7M1035.5 205.1V219.5M1036.5 204.4V215.3M1037.5 200.9V218.1M1038.5 204.2V218.9M1039.5 199.2V213.2M1040.5 201.7V220.4M1041.5 203.7V221.4M1042.5 200.1V216.6M1043.5 198.7V216.9M1044.5 198.2V216.3M1045.5 191.2V228.1M1046.5 188.9V219.3M1047.5 191.6V217.7M1048.5 200.8V214.3M1049.5 199.3V214.1M1050.5 200.8V215.6M1051.5 203.0V216.6M1052.5 199.0V218.2M1053.5 204.4V215.5M1054.5 195.1V216.7M1055.5 198.6V213.9M1056.5 201.2V218.1M1057.5 190.9V214.9M1058.5 199.9V218.6M1059.5 188.7V218.5M1060.5 198.4V214.5M1061.5 200.7V221.3M1062.5 192.3V214.0M1063.5 190.9V216.8M1064.5 195.7V224.5M1065.5 188.7V226.2M1066.5 192.1V225.6M1067.5 188.6V228.4M1068.5 188.5V221.9M1069.5 194.4V220.7M1070.5 188.5V221.3M1071.5 187.8V229.2M1072.5 195.9V218.1M1073.5 196.5V221.3M1074.5 196.7V219.6M1075.5 197.7V217.2M1076.5 189.4V220.6M1077.5 199.5V218.1M1078.5 190.5V226.8M1079.5 186.9V233.2M1080.5 178.5V238.5M1081.5 186.0V219.4M1082.5 185.7V236.1M1083.5 184.0V229.2M1084.5 192.6V236.6M1085.5 192.4V221.8M1086.5 201.9V217.1M1087.5 200.5V225.8M1088.5 198.2V237.3M1089.5 189.9V224.5M1090.5 201.8V216.8M1091.5 191.8V219.6M1092.5 195.8V223.1M1093.5 200.1V217.4M1094.5 197.6V217.0M1095.5 196.8V219.4M1096.5 203.6V219.7M1097.5 202.9V223.9M1098.5 204.0V228.8M1099.5 199.8V218.5M1100.5 198.9V220.5M1101.5 185.4V220.8M1102.5 186.6V231.8M1103.5 177.2V224.4M1104.5 198.0V231.8M1105.5 191.6V240.2M1106.5 192.2V224.5M1107.5 196.2V219.3M1108.5 196.8V216.6M1109.5 193.9V219.5M1110.5 195.1V228.0M1111.5 197.4V221.4M1112.5 184.8V231.4M1113.5 193.1V218.2M1114.5 191.3V227.0M1115.5 194.4V225.8M1116.5 181.7V226.2M1117.5 177.3V235.3M1118.5 198.0V232.5M1119.5 195.0V220.5M1120.5 190.0V225.4M1121.5 188.0V232.0M1122.5 188.1V235.1M1123.5 195.9V236.4M1124.5 194.2V224.6M1125.5 195.8V217.9M1126.5 194.0V223.6M1127.5 191.7V220.1M1128.5 182.3V219.7M1129.5 191.8V223.3M1130.5 193.1V223.9M1131.5 192.4V232.5M1132.5 177.1V223.8M1133.5 187.6V232.6M1134.5 172.5V244.0M1135.5 183.3V245.7M1136.5 195.7V251.5M1137.5 164.5V253.5M1138.5 196.4V252.5M1139.5 197.4V250.3M1140.5 197.4V225.5M1141.5 190.4V226.4M1142.5 185.9V236.6M1143.5 193.7V252.8M1144.5 180.7V237.2M1145.5 194.2V238.8M1146.5 194.7V224.6M1147.5 186.9V229.0M1148.5 196.5V221.5M1149.5 190.0V239.4M1150.5 168.5V238.5M1151.5 199.5V223.5M1152.5 194.7V245.3M1153.5 189.5V221.9M1154.5 200.9V224.7M1155.5 202.2V224.1M1156.5 198.9V221.3M1157.5 198.5V222.8M1158.5 193.6V223.9M1159.5 193.0V231.6M1160.5 185.3V228.0M1161.5 197.1V228.8M1162.5 195.2V223.3M1163.5 194.5V219.1M1164.5 184.0V232.8M1165.5 195.3V221.8M1166.5 194.7V218.0M1167.5 190.8V220.5M1168.5 198.7V226.5M1169.5 198.2V232.3M1170.5 189.0V223.9M1171.5 186.1V230.9M1172.5 192.3V230.8M1173.5 195.2V228.5M1174.5 191.0V219.8M1175.5 195.7V226.9M1176.5 198.4V218.2M1177.5 198.3V215.7M1178.5 197.9V221.0M1179.5 187.1V221.4M1180.5 187.2V229.8M1181.5 190.0V222.4M1182.5 187.5V217.1M1183.5 200.4V223.2M1184.5 196.0V221.9M1185.5 194.1V229.1M1186.5 188.0V226.8M1187.5 194.5V224.5M1188.5 196.0V225.2M1189.5 193.8V227.0M1190.5 189.3V215.4M1191.5 195.5V220.6M1192.5 200.3V219.4M1193.5 201.1V215.1M1194.5 200.5V217.8M1195.5 200.8V216.8M1196.5 199.5V212.3M1197.5 200.7V212.4M1198.5 204.2V211.5M1199.5 199.6V211.6M1200.5 202.1V211.6M1201.5 203.7V214.6M1202.5 203.2V213.5M1203.5 198.5V213.3M1204.5 202.8V216.3M1205.5 198.0V216.7M1206.5 202.3V212.9M1207.5 200.0V221.8M1208.5 202.0V215.5M1209.5 200.5V212.9M1210.5 203.6V216.8M1211.5 201.1V218.3M1212.5 199.9V217.8M1213.5 202.5V220.6M1214.5 199.7V215.8M1215.5 198.1V214.0M1216.5 202.2V223.2M1217.5 197.8V218.0M1218.5 202.6V223.9M1219.5 200.4V216.1M1220.5 203.0V219.8M1221.5 200.2V216.4M1222.5 203.6V218.5M1223.5 197.4V213.8M1224.5 200.5V212.6M1225.5 201.6V217.8M1226.5 197.9V219.4M1227.5 196.3V219.7M1228.5 196.7V220.0M1229.5 205.2V215.1M1230.5 202.1V224.8M1231.5 202.3V217.9M1232.5 195.6V221.5M1233.5 199.3V220.0M1234.5 199.2V216.4M1235.5 201.7V218.5M1236.5 192.9V221.7M1237.5 192.1V222.3M1238.5 197.5V214.4M1239.5 192.7V223.0M1240.5 191.0V218.0M1241.5 191.9V215.7M1242.5 195.7V221.6M1243.5 192.9V217.8M1244.5 198.4V214.3M1245.5 197.9V216.0M1246.5 201.0V221.7M1247.5 192.7V222.5M1248.5 195.9V217.7M1249.5 195.3V226.0M1250.5 197.0V216.8M1251.5 192.1V215.6M1252.5 195.8V226.0M1253.5 194.7V223.5M1254.5 198.6V214.5M1255.5 201.1V221.2M1256.5 201.8V216.0M1257.5 199.0V212.6M1258.5 198.3V221.0M1259.5 199.6V220.3M1260.5 192.2V215.6M1261.5 198.6V222.2M1262.5 195.7V215.9M1263.5 197.6V214.9M1264.5 198.1V213.2M1265.5 201.5V212.5M1266.5 203.4V211.7M1267.5 203.9V213.4M1268.5 199.1V213.7M1269.5 195.9V214.3M1270.5 198.8V218.7M1271.5 202.8V223.6M1272.5 200.5V216.1M1273.5 202.5V215.8M1274.5 196.7V214.5M1275.5 203.1V216.6M1276.5 202.8V220.0M1277.5 202.0V216.9M1278.5 202.5V217.5M1279.5 201.2V219.8M1280.5 199.7V217.8M1281.5 205.8V212.2M1282.5 205.6V217.2M1283.5 201.1V217.1M1284.5 202.5V216.1M1285.5 196.8V214.2M1286.5 199.2V213.9M1287.5 198.2V223.3M1288.5 196.1V219.6M1289.5 203.3V217.9M1290.5 200.2V230.1M1291.5 200.6V224.1M1292.5 199.8V219.9M1293.5 196.1V217.5M1294.5 194.8V216.8M1295.5 199.2V223.1M1296.5 203.7V217.4M1297.5 203.5V221.2M1298.5 196.2V226.6M1299.5 199.4V225.8M1300.5 197.4V221.5M1301.5 186.8V223.0M1302.5 198.0V220.1M1303.5 199.5V222.3M1304.5 198.8V221.6M1305.5 194.4V213.5M1306.5 194.7V214.9M1307.5 202.4V213.7M1308.5 199.6V216.5M1309.5 200.5V213.2M1310.5 196.1V214.6M1311.5 193.4V215.8M1312.5 199.1V223.3M1313.5 189.8V224.3M1314.5 200.2V223.6M1315.5 198.4V219.7M1316.5 199.9V217.0M1317.5 201.5V222.6M1318.5 203.0V217.8M1319.5 195.0V217.4M1320.5 201.4V220.4M1321.5 195.9V221.2M1322.5 201.4V222.8M1323.5 190.7V215.3M1324.5 189.8V220.7M1325.5 190.0V219.0M1326.5 198.9V217.9M1327.5 198.7V218.4M1328.5 190.9V221.3M1329.5 200.4V214.4M1330.5 202.3V223.4M1331.5 200.4V227.2M1332.5 202.7V216.9M1333.5 196.3V226.0M1334.5 201.1V222.7M1335.5 196.5V218.2M1336.5 200.7V227.2M1337.5 196.6V220.6M1338.5 189.8V226.4" stroke="#000080" stroke-width="1" fill="none" shape-rendering="crispEdges"/><rect x="1338" y="129" width="1" height="160" fill="#1010a0"/></svg>
<div class="a" style="left:56px;top:306px;width:1283px;height:161px;background:#fff"></div>
<svg class="a" style="left:0;top:0" width="1366" height="768"><rect x="56" y="326" width="1282" height="1" fill="#dcdcdc"/><rect x="56" y="346" width="1282" height="1" fill="#dcdcdc"/><rect x="56" y="366" width="1282" height="1" fill="#dcdcdc"/><rect x="56" y="386" width="1282" height="1" fill="#dcdcdc"/><rect x="56" y="406" width="1282" height="1" fill="#dcdcdc"/><rect x="56" y="426" width="1282" height="1" fill="#dcdcdc"/><rect x="56" y="446" width="1282" height="1" fill="#dcdcdc"/><rect x="56" y="466" width="1282" height="1" fill="#dcdcdc"/><rect x="120" y="306" width="1" height="161" fill="#dcdcdc"/><rect x="184" y="306" width="1" height="161" fill="#dcdcdc"/><rect x="248" y="306" width="1" height="161" fill="#dcdcdc"/><rect x="312" y="306" width="1" height="161" fill="#dcdcdc"/><rect x="376" y="306" width="1" height="161" fill="#dcdcdc"/><rect x="441" y="306" width="1" height="161" fill="#dcdcdc"/><rect x="505" y="306" width="1" height="161" fill="#dcdcdc"/><rect x="569" y="306" width="1" height="161" fill="#dcdcdc"/><rect x="633" y="306" width="1" height="161" fill="#dcdcdc"/><rect x="697" y="306" width="1" height="161" fill="#dcdcdc"/><rect x="761" y="306" width="1" height="161" fill="#dcdcdc"/><rect x="825" y="306" width="1" height="161" fill="#dcdcdc"/><rect x="889" y="306" width="1" height="161" fill="#dcdcdc"/><rect x="953" y="306" width="1" height="161" fill="#dcdcdc"/><rect x="1018" y="306" width="1" height="161" fill="#dcdcdc"/><rect x="1082" y="306" width="1" height="161" fill="#dcdcdc"/><rect x="1146" y="306" width="1" height="161" fill="#dcdcdc"/><rect x="1210" y="306" width="1" height="161" fill="#dcdcdc"/><rect x="1274" y="306" width="1" height="161" fill="#dcdcdc"/><rect x="55" y="305" width="1" height="162" fill="#a09a70"/><rect x="48" y="306" width="7" height="1" fill="#000"/><rect x="51" y="326" width="4" height="1" fill="#000"/><rect x="51" y="346" width="4" height="1" fill="#000"/><rect x="51" y="366" width="4" height="1" fill="#000"/><rect x="48" y="386" width="7" height="1" fill="#000"/><rect x="51" y="406" width="4" height="1" fill="#000"/><rect x="51" y="426" width="4" height="1" fill="#000"/><rect x="51" y="446" width="4" height="1" fill="#000"/><rect x="48" y="466" width="7" height="1" fill="#000"/><path d="M56.5 384.7V387.8M57.5 384.2V388.4M58.5 384.4V389.5M59.5 384.3V391.0M60.5 383.7V388.0M61.5 383.8V389.9M62.5 382.5V390.6M63.5 382.6V388.8M64.5 384.4V390.2M65.5 384.1V390.1M66.5 382.9V389.9M67.5 383.4V392.8M68.5 379.6V392.9M69.5 383.0V388.0M70.5 383.1V390.0M71.5 382.7V389.3M72.5 383.7V391.0M73.5 383.5V387.6M74.5 383.1V391.4M75.5 382.0V388.4M76.5 380.7V388.2M77.5 381.6V390.4M78.5 381.8V388.8M79.5 382.9V388.1M80.5 384.4V389.7M81.5 384.5V388.6M82.5 381.8V387.6M83.5 384.2V391.0M84.5 384.4V388.2M85.5 382.8V388.2M86.5 382.6V387.8M87.5 384.4V389.6M88.5 383.9V390.2M89.5 381.7V389.2M90.5 384.2V388.0M91.5 378.5V388.5M92.5 384.0V387.4M93.5 382.6V387.9M94.5 383.7V388.2M95.5 382.6V389.0M96.5 382.4V388.1M97.5 381.2V388.2M98.5 383.1V388.9M99.5 383.4V387.5M100.5 381.0V390.5M101.5 383.9V387.8M102.5 383.7V391.0M103.5 384.4V390.9M104.5 382.6V389.1M105.5 384.4V387.5M106.5 384.9V388.1M107.5 384.6V389.1M108.5 384.8V387.5M109.5 384.9V387.4M110.5 384.7V388.5M111.5 383.8V387.3M112.5 384.3V389.5M113.5 383.5V387.6M114.5 382.9V388.4M115.5 383.5V387.8M116.5 384.2V390.0M117.5 384.6V388.1M118.5 384.7V389.3M119.5 384.7V387.0M120.5 382.0V388.2M121.5 381.5V387.2M122.5 384.4V387.4M123.5 383.7V388.3M124.5 382.1V387.5M125.5 384.8V387.2M126.5 384.3V387.2M127.5 383.2V387.2M128.5 382.8V390.0M129.5 383.7V388.3M130.5 384.5V387.1M131.5 384.3V387.6M132.5 383.1V388.4M133.5 383.5V389.1M134.5 382.3V389.1M135.5 383.9V387.4M136.5 384.3V387.4M137.5 382.7V388.1M138.5 383.9V388.0M139.5 384.2V388.9M140.5 384.4V390.3M141.5 383.7V387.4M142.5 381.7V387.5M143.5 384.0V387.2M144.5 384.5V389.1M145.5 380.9V389.8M146.5 383.4V390.1M147.5 381.9V387.6M148.5 384.5V387.8M149.5 384.4V391.4M150.5 384.6V389.8M151.5 384.2V391.1M152.5 382.0V389.6M153.5 384.0V387.3M154.5 382.6V388.2M155.5 384.0V388.5M156.5 382.1V387.7M157.5 384.6V387.4M158.5 384.5V387.5M159.5 384.6V390.0M160.5 381.0V388.3M161.5 384.6V387.2M162.5 384.0V387.3M163.5 384.6V387.7M164.5 383.4V390.0M165.5 383.0V387.3M166.5 382.6V388.5M167.5 384.2V388.0M168.5 384.5V387.9M169.5 384.2V388.6M170.5 383.7V387.8M171.5 382.7V388.8M172.5 378.7V388.0M173.5 381.7V390.4M174.5 382.1V387.6M175.5 383.8V389.9M176.5 384.3V392.3M177.5 383.4V389.4M178.5 382.4V389.9M179.5 383.5V387.9M180.5 382.7V387.7M181.5 378.6V387.9M182.5 381.2V390.5M183.5 384.3V391.9M184.5 382.5V387.9M185.5 384.2V390.7M186.5 383.3V390.2M187.5 381.1V389.6M188.5 380.7V392.9M189.5 379.2V392.2M190.5 382.2V389.7M191.5 379.7V390.8M192.5 382.5V391.3M193.5 379.7V389.3M194.5 382.8V389.9M195.5 382.4V389.3M196.5 382.7V388.9M197.5 382.0V389.1M198.5 384.5V388.4M199.5 384.9V390.7M200.5 383.3V387.7M201.5 380.9V388.2M202.5 383.4V389.0M203.5 383.2V387.4M204.5 384.1V388.5M205.5 384.0V390.8M206.5 382.0V387.6M207.5 384.7V392.2M208.5 383.4V387.5M209.5 383.6V389.9M210.5 384.6V387.4M211.5 384.7V389.3M212.5 385.0V389.8M213.5 385.0V388.8M214.5 383.7V388.2M215.5 384.2V387.0M216.5 382.5V387.2M217.5 383.1V387.0M218.5 384.7V387.1M219.5 384.8V388.6M220.5 384.6V387.0M221.5 383.7V388.6M222.5 383.4V387.1M223.5 383.0V387.0M224.5 382.9V387.0M225.5 384.7V389.9M226.5 385.0V387.3M227.5 384.9V387.6M228.5 383.2V387.3M229.5 383.3V388.1M230.5 384.5V387.6M231.5 384.6V388.7M232.5 384.5V392.5M233.5 384.7V389.2M234.5 384.1V391.4M235.5 383.8V389.6M236.5 384.2V387.7M237.5 383.9V389.4M238.5 383.1V389.3M239.5 382.1V387.6M240.5 381.7V387.7M241.5 384.1V388.7M242.5 383.8V388.1M243.5 384.7V387.7M244.5 384.5V387.8M245.5 384.9V387.4M246.5 382.1V388.8M247.5 384.5V389.1M248.5 383.1V388.7M249.5 384.7V388.9M250.5 383.7V387.8M251.5 380.7V389.5M252.5 383.7V389.9M253.5 384.2V390.1M254.5 384.4V387.4M255.5 384.5V387.4M256.5 383.8V388.6M257.5 380.6V389.4M258.5 383.5V389.4M259.5 380.7V388.5M260.5 384.1V389.6M261.5 384.1V387.9M262.5 381.9V388.2M263.5 383.2V389.9M264.5 384.1V388.1M265.5 384.3V392.5M266.5 383.8V389.7M267.5 381.4V388.8M268.5 381.6V390.5M269.5 382.4V389.9M270.5 383.0V387.9M271.5 382.2V388.3M272.5 384.0V388.4M273.5 384.6V388.2M274.5 384.4V387.9M275.5 381.1V388.0M276.5 384.1V388.5M277.5 384.3V388.3M278.5 384.6V389.2M279.5 384.5V389.9M280.5 382.4V390.5M281.5 382.3V388.0M282.5 384.3V390.1M283.5 384.3V389.3M284.5 383.5V390.5M285.5 384.0V387.7M286.5 384.2V387.6M287.5 379.6V387.7M288.5 381.1V387.9M289.5 383.7V388.6M290.5 380.8V388.0M291.5 383.0V387.9M292.5 379.3V388.3M293.5 382.5V391.1M294.5 382.2V388.0M295.5 383.4V390.5M296.5 383.8V387.6M297.5 380.6V387.7M298.5 384.1V387.0M299.5 381.2V387.5M300.5 383.0V387.3M301.5 382.7V391.3M302.5 384.0V388.2M303.5 382.7V391.0M304.5 384.4V388.0M305.5 381.7V388.8M306.5 383.5V387.9M307.5 384.4V387.9M308.5 382.2V391.2M309.5 384.6V387.4M310.5 382.4V388.5M311.5 384.6V387.8M312.5 382.7V387.4M313.5 384.3V388.7M314.5 382.5V389.1M315.5 381.8V387.9M316.5 380.6V390.0M317.5 384.0V390.2M318.5 378.9V387.9M319.5 384.1V390.2M320.5 383.7V388.9M321.5 383.8V387.3M322.5 383.4V389.8M323.5 381.0V388.5M324.5 384.5V387.6M325.5 383.8V388.2M326.5 380.9V390.1M327.5 383.6V389.8M328.5 383.5V387.7M329.5 384.4V387.8M330.5 384.7V387.3M331.5 381.6V388.1M332.5 384.4V388.5M333.5 382.7V389.1M334.5 381.9V390.6M335.5 383.3V389.5M336.5 383.9V388.7M337.5 383.5V387.7M338.5 384.1V389.3M339.5 383.9V390.8M340.5 383.9V388.6M341.5 382.5V387.5M342.5 384.1V389.2M343.5 384.5V391.3M344.5 383.0V390.1M345.5 384.3V388.2M346.5 384.3V388.3M347.5 381.9V387.8M348.5 382.3V388.0M349.5 381.1V389.5M350.5 381.3V388.9M351.5 383.2V387.7M352.5 383.4V387.6M353.5 384.1V389.8M354.5 384.3V388.7M355.5 383.9V387.2M356.5 384.5V387.3M357.5 384.5V387.9M358.5 383.7V390.8M359.5 382.0V389.8M360.5 384.2V389.8M361.5 384.2V387.6M362.5 382.3V388.5M363.5 384.8V387.9M364.5 382.2V390.5M365.5 383.6V388.4M366.5 383.0V388.0M367.5 384.0V388.1M368.5 380.7V387.8M369.5 381.4V389.2M370.5 384.4V389.1M371.5 382.7V389.5M372.5 384.2V388.1M373.5 382.3V388.9M374.5 384.0V388.7M375.5 381.7V390.0M376.5 383.6V387.5M377.5 382.1V387.5M378.5 384.1V389.0M379.5 384.3V389.3M380.5 379.2V388.0M381.5 384.2V387.5M382.5 383.8V390.1M383.5 383.0V387.2M384.5 383.9V387.0M385.5 382.9V389.6M386.5 383.0V387.1M387.5 384.1V387.4M388.5 384.4V388.1M389.5 383.7V389.4M390.5 382.5V388.1M391.5 381.3V387.8M392.5 382.4V389.3M393.5 383.1V388.6M394.5 381.1V387.5M395.5 384.3V387.7M396.5 384.7V387.6M397.5 383.0V389.2M398.5 384.5V389.8M399.5 383.6V388.0M400.5 384.2V387.8M401.5 382.5V387.7M402.5 384.3V387.9M403.5 383.5V390.5M404.5 381.9V388.0M405.5 381.8V391.3M406.5 382.9V388.9M407.5 383.6V389.5M408.5 383.2V388.2M409.5 382.5V391.9M410.5 379.9V390.9M411.5 384.2V388.1M412.5 383.8V392.5M413.5 384.3V391.1M414.5 383.8V389.0M415.5 379.8V388.5M416.5 384.0V389.6M417.5 380.5V388.1M418.5 382.4V387.7M419.5 382.5V387.8M420.5 382.6V388.4M421.5 383.2V389.4M422.5 382.5V387.6M423.5 384.7V388.5M424.5 381.4V389.0M425.5 381.3V391.8M426.5 377.9V388.2M427.5 380.1V387.5M428.5 382.9V389.2M429.5 382.8V387.5M430.5 381.1V389.0M431.5 380.9V389.6M432.5 381.1V388.0M433.5 383.9V388.3M434.5 382.2V389.8M435.5 384.0V387.2M436.5 382.3V387.6M437.5 384.2V387.6M438.5 384.2V388.5M439.5 382.0V387.7M440.5 383.2V393.5M441.5 384.4V387.3M442.5 381.8V388.1M443.5 384.2V391.1M444.5 383.4V389.9M445.5 382.1V388.3M446.5 383.7V387.7M447.5 382.2V388.1M448.5 381.4V387.9M449.5 383.2V389.6M450.5 383.5V391.8M451.5 382.7V391.5M452.5 383.3V389.5M453.5 384.1V390.1M454.5 381.4V387.9M455.5 384.5V387.7M456.5 383.8V387.8M457.5 380.9V389.0M458.5 382.6V388.1M459.5 384.0V388.8M460.5 380.6V390.9M461.5 384.1V389.5M462.5 384.3V389.3M463.5 382.3V387.3M464.5 384.0V390.2M465.5 384.6V387.0M466.5 384.2V387.8M467.5 384.4V387.2M468.5 384.5V388.4M469.5 384.5V387.8M470.5 380.0V387.4M471.5 384.5V387.5M472.5 383.7V388.8M473.5 384.3V388.7M474.5 384.3V389.9M475.5 383.3V387.9M476.5 380.4V388.5M477.5 381.1V389.8M478.5 382.5V392.3M479.5 383.2V389.1M480.5 382.1V392.8M481.5 379.7V389.0M482.5 384.1V388.6M483.5 382.6V388.5M484.5 383.4V390.5M485.5 384.4V388.2M486.5 384.4V388.2M487.5 382.7V393.1M488.5 383.8V391.1M489.5 384.5V388.5M490.5 382.0V389.8M491.5 383.5V387.8M492.5 381.8V387.8M493.5 383.0V388.1M494.5 381.0V388.2M495.5 383.7V388.2M496.5 383.7V394.1M497.5 380.9V389.9M498.5 380.8V392.7M499.5 384.2V388.4M500.5 384.0V387.8M501.5 383.5V392.7M502.5 383.2V388.4M503.5 380.6V388.0M504.5 383.3V389.8M505.5 383.0V389.8M506.5 383.5V389.2M507.5 382.4V387.8M508.5 377.5V387.6M509.5 381.9V388.1M510.5 384.5V388.7M511.5 382.1V387.6M512.5 383.1V388.9M513.5 384.0V387.9M514.5 383.8V390.3M515.5 382.8V390.5M516.5 382.5V388.2M517.5 380.7V388.3M518.5 380.6V389.3M519.5 380.3V387.8M520.5 384.4V391.8M521.5 381.0V390.6M522.5 383.2V387.6M523.5 383.5V388.1M524.5 384.0V388.7M525.5 382.7V388.0M526.5 379.1V393.1M527.5 383.0V388.1M528.5 384.2V389.9M529.5 383.1V387.6M530.5 384.3V388.4M531.5 383.7V388.5M532.5 383.6V390.3M533.5 382.0V389.1M534.5 381.7V388.1M535.5 379.8V388.6M536.5 379.0V389.9M537.5 381.7V388.2M538.5 377.0V388.1M539.5 383.7V392.9M540.5 383.4V389.2M541.5 384.5V387.5M542.5 383.9V388.7M543.5 381.3V387.5M544.5 383.9V389.3M545.5 382.6V387.8M546.5 380.0V387.8M547.5 383.5V390.1M548.5 384.5V387.5M549.5 384.4V387.4M550.5 383.8V387.7M551.5 381.5V388.0M552.5 382.1V389.1M553.5 382.5V390.4M554.5 383.4V388.1M555.5 383.0V388.0M556.5 382.9V389.1M557.5 382.7V388.5M558.5 383.6V393.6M559.5 383.9V390.4M560.5 383.4V388.7M561.5 383.5V390.0M562.5 381.8V387.9M563.5 383.0V388.7M564.5 382.8V388.3M565.5 383.3V387.9M566.5 383.7V390.9M567.5 382.0V390.1M568.5 383.3V390.9M569.5 384.1V387.8M570.5 383.3V388.6M571.5 380.8V388.7M572.5 382.2V391.3M573.5 382.1V388.8M574.5 383.1V388.8M575.5 381.0V391.9M576.5 383.0V389.0M577.5 383.6V389.7M578.5 379.4V391.4M579.5 383.8V388.5M580.5 384.2V389.1M581.5 382.9V392.1M582.5 382.8V390.3M583.5 379.8V392.8M584.5 383.3V388.9M585.5 382.4V390.9M586.5 382.3V392.1M587.5 382.1V390.7M588.5 383.0V393.2M589.5 382.9V389.0M590.5 382.5V388.0M591.5 381.5V390.1M592.5 381.9V390.7M593.5 380.2V392.1M594.5 382.0V392.4M595.5 381.7V390.4M596.5 380.6V390.7M597.5 381.2V391.9M598.5 378.6V391.3M599.5 381.5V390.7M600.5 382.2V390.0M601.5 382.3V391.5M602.5 379.3V389.6M603.5 381.5V391.8M604.5 382.0V392.3M605.5 380.0V392.4M606.5 383.0V389.6M607.5 382.5V393.3M608.5 382.1V395.2M609.5 378.9V391.2M610.5 381.7V391.4M611.5 378.8V394.9M612.5 379.8V390.2M613.5 380.0V391.3M614.5 379.7V390.7M615.5 378.7V391.3M616.5 376.4V392.6M617.5 377.5V394.3M618.5 374.3V396.9M619.5 377.6V400.9M620.5 378.1V393.6M621.5 379.2V394.3M622.5 372.0V392.0M623.5 378.4V397.1M624.5 378.0V394.6M625.5 374.7V391.5M626.5 374.1V390.6M627.5 376.5V392.3M628.5 375.8V392.5M629.5 375.7V393.7M630.5 378.1V397.5M631.5 376.0V392.8M632.5 378.0V398.9M633.5 376.9V398.8M634.5 380.4V396.5M635.5 380.8V393.0M636.5 379.5V393.8M637.5 379.3V393.5M638.5 379.3V393.2M639.5 380.6V390.8M640.5 381.4V393.2M641.5 379.3V391.0M642.5 380.5V392.4M643.5 380.2V391.6M644.5 377.4V392.3M645.5 378.3V391.1M646.5 379.4V393.9M647.5 380.8V394.2M648.5 380.6V393.4M649.5 379.7V393.9M650.5 378.3V396.2M651.5 380.0V393.9M652.5 379.9V393.8M653.5 377.0V393.7M654.5 377.6V394.5M655.5 377.7V395.5M656.5 377.5V396.2M657.5 377.5V393.6M658.5 376.5V398.2M659.5 376.0V395.8M660.5 377.6V393.8M661.5 375.8V392.5M662.5 376.3V393.5M663.5 375.8V393.5M664.5 374.2V396.3M665.5 378.1V395.1M666.5 377.3V392.9M667.5 374.0V393.5M668.5 374.2V392.6M669.5 377.7V393.7M670.5 374.1V394.6M671.5 372.9V397.5M672.5 376.4V401.5M673.5 372.0V398.9M674.5 376.7V401.3M675.5 373.4V397.3M676.5 376.7V395.4M677.5 374.0V398.6M678.5 371.4V398.6M679.5 371.7V394.5M680.5 370.8V395.7M681.5 370.9V394.3M682.5 374.2V394.4M683.5 372.7V397.4M684.5 375.8V396.5M685.5 376.9V394.9M686.5 378.1V396.0M687.5 378.0V395.7M688.5 378.6V394.6M689.5 379.2V394.9M690.5 379.2V395.7M691.5 377.5V396.5M692.5 376.7V398.2M693.5 375.7V398.1M694.5 376.4V396.5M695.5 374.7V397.1M696.5 375.5V398.8M697.5 372.5V400.2M698.5 372.7V397.8M699.5 373.4V398.2M700.5 373.6V396.9M701.5 377.7V395.0M702.5 376.2V394.9M703.5 378.6V403.0M704.5 377.2V397.2M705.5 375.4V399.0M706.5 376.6V397.1M707.5 374.3V400.7M708.5 370.4V398.2M709.5 375.4V395.4M710.5 372.8V398.7M711.5 370.9V395.8M712.5 372.4V396.5M713.5 374.6V393.8M714.5 374.5V392.5M715.5 371.1V393.3M716.5 374.2V394.6M717.5 374.9V392.7M718.5 375.8V393.9M719.5 375.5V395.3M720.5 377.5V395.0M721.5 376.7V396.7M722.5 377.2V394.4M723.5 376.2V395.5M724.5 378.4V401.4M725.5 375.1V394.2M726.5 376.2V397.6M727.5 373.2V394.7M728.5 374.7V394.1M729.5 375.2V398.4M730.5 376.1V402.7M731.5 378.3V398.1M732.5 379.5V398.4M733.5 375.4V394.8M734.5 378.8V395.0M735.5 376.0V393.6M736.5 378.4V395.5M737.5 378.1V394.0M738.5 376.9V397.5M739.5 376.0V397.7M740.5 377.2V393.0M741.5 370.7V393.2M742.5 374.3V393.8M743.5 374.8V397.1M744.5 376.1V393.2M745.5 378.3V392.8M746.5 379.7V393.4M747.5 380.0V396.7M748.5 379.5V399.3M749.5 377.1V395.4M750.5 378.5V397.3M751.5 369.6V395.5M752.5 376.2V399.0M753.5 377.1V396.0M754.5 379.5V397.4M755.5 379.7V395.7M756.5 378.4V394.9M757.5 372.2V393.7M758.5 374.2V394.4M759.5 375.4V394.0M760.5 376.1V393.2M761.5 374.3V394.5M762.5 374.1V393.5M763.5 370.1V397.0M764.5 375.9V398.2M765.5 371.6V396.7M766.5 376.7V395.8M767.5 376.8V396.4M768.5 375.7V395.3M769.5 376.1V400.3M770.5 375.0V396.7M771.5 375.7V395.2M772.5 374.6V396.0M773.5 377.8V395.8M774.5 377.3V395.6M775.5 378.1V395.5M776.5 379.0V393.5M777.5 378.8V393.9M778.5 378.8V395.8M779.5 376.7V393.9M780.5 378.5V396.2M781.5 380.0V393.7M782.5 380.4V394.6M783.5 380.6V394.4M784.5 379.8V394.4M785.5 379.8V392.6M786.5 376.3V393.5M787.5 372.5V396.1M788.5 376.1V396.5M789.5 377.9V392.5M790.5 379.5V394.0M791.5 379.7V392.7M792.5 377.1V392.5M793.5 376.9V394.6M794.5 373.1V391.5M795.5 373.2V393.2M796.5 377.2V393.1M797.5 379.6V393.1M798.5 374.6V394.0M799.5 376.1V393.0M800.5 380.7V396.6M801.5 378.2V395.3M802.5 379.0V394.0M803.5 374.8V397.4M804.5 379.5V392.5M805.5 378.5V398.8M806.5 374.6V397.6M807.5 379.2V391.5M808.5 375.3V390.7M809.5 379.4V391.0M810.5 380.8V390.5M811.5 381.6V392.0M812.5 377.2V390.5M813.5 380.6V389.4M814.5 382.3V389.6M815.5 380.9V392.9M816.5 382.9V391.3M817.5 383.1V388.9M818.5 383.0V389.1M819.5 382.7V394.2M820.5 382.0V388.5M821.5 381.8V390.8M822.5 379.0V389.1M823.5 380.5V389.5M824.5 379.8V391.1M825.5 381.5V393.6M826.5 380.8V389.8M827.5 381.2V390.3M828.5 382.5V389.1M829.5 381.9V391.1M830.5 381.9V389.5M831.5 379.6V390.3M832.5 381.7V388.9M833.5 382.1V388.5M834.5 382.8V392.4M835.5 383.8V388.4M836.5 381.9V389.9M837.5 383.8V387.9M838.5 382.1V389.4M839.5 381.8V392.0M840.5 384.0V394.2M841.5 380.6V389.2M842.5 379.2V389.3M843.5 381.9V393.1M844.5 383.6V394.0M845.5 381.6V389.2M846.5 383.3V389.2M847.5 381.1V388.8M848.5 382.7V391.9M849.5 380.8V389.2M850.5 381.7V391.6M851.5 382.8V388.9M852.5 381.0V388.4M853.5 382.6V388.6M854.5 382.5V389.6M855.5 382.7V388.3M856.5 380.9V391.0M857.5 380.8V390.1M858.5 381.3V391.7M859.5 381.2V391.3M860.5 382.8V389.7M861.5 382.5V388.0M862.5 383.7V387.8M863.5 383.4V388.5M864.5 383.9V388.4M865.5 383.6V388.3M866.5 381.7V389.1M867.5 384.1V388.8M868.5 383.5V391.3M869.5 383.8V391.9M870.5 384.1V388.0M871.5 383.0V388.0M872.5 379.5V388.8M873.5 382.1V394.3M874.5 380.6V389.8M875.5 381.6V389.2M876.5 382.5V391.2M877.5 382.9V388.4M878.5 376.0V388.4M879.5 383.2V388.3M880.5 380.9V389.0M881.5 383.4V388.1M882.5 383.4V388.5M883.5 380.8V388.1M884.5 379.9V390.7M885.5 383.3V388.5M886.5 383.9V390.0M887.5 383.1V389.6M888.5 382.5V388.5M889.5 381.7V390.0M890.5 381.2V389.3M891.5 382.6V388.4M892.5 383.5V388.7M893.5 379.4V389.6M894.5 380.1V388.7M895.5 382.6V391.5M896.5 383.7V388.8M897.5 383.4V393.5M898.5 383.1V392.4M899.5 379.8V388.0M900.5 381.5V388.9M901.5 382.6V387.8M902.5 382.6V391.7M903.5 383.3V392.0M904.5 383.1V388.4M905.5 383.1V388.0M906.5 382.0V392.6M907.5 379.6V388.8M908.5 381.4V388.7M909.5 381.2V389.8M910.5 383.9V388.9M911.5 384.5V388.7M912.5 382.3V387.9M913.5 384.0V388.8M914.5 383.3V389.1M915.5 384.0V388.2M916.5 383.6V388.5M917.5 382.7V389.0M918.5 382.1V392.9M919.5 382.3V394.6M920.5 383.4V389.0M921.5 383.2V390.5M922.5 382.7V391.1M923.5 382.1V390.2M924.5 382.4V389.9M925.5 382.8V389.5M926.5 382.9V388.6M927.5 383.3V389.2M928.5 382.1V391.1M929.5 383.8V389.5M930.5 383.6V388.7M931.5 382.5V388.3M932.5 384.2V390.9M933.5 383.5V394.6M934.5 383.1V392.0M935.5 384.0V389.0M936.5 381.1V392.8M937.5 382.0V388.6M938.5 383.3V391.9M939.5 383.4V393.3M940.5 383.3V389.8M941.5 381.6V388.9M942.5 379.0V393.5M943.5 379.7V388.6M944.5 381.8V388.8M945.5 381.4V392.3M946.5 381.9V392.3M947.5 383.5V388.2M948.5 382.6V389.7M949.5 383.9V390.0M950.5 382.5V387.4M951.5 383.2V388.0M952.5 381.8V389.8M953.5 379.5V390.6M954.5 383.1V388.6M955.5 383.0V388.2M956.5 383.5V388.2M957.5 380.4V389.8M958.5 378.9V392.5M959.5 379.1V390.1M960.5 379.7V390.2M961.5 380.9V389.5M962.5 384.2V389.0M963.5 381.5V390.0M964.5 383.5V388.6M965.5 383.4V388.9M966.5 383.0V389.1M967.5 382.9V391.4M968.5 377.9V394.1M969.5 383.2V391.7M970.5 379.8V389.3M971.5 382.5V392.7M972.5 381.5V390.8M973.5 382.4V390.4M974.5 382.8V388.9M975.5 381.6V388.0M976.5 382.2V388.1M977.5 381.4V389.6M978.5 383.3V387.8M979.5 383.5V389.3M980.5 383.5V389.3M981.5 383.0V389.9M982.5 379.7V392.9M983.5 382.9V389.3M984.5 382.2V388.6M985.5 384.1V389.7M986.5 384.2V388.6M987.5 383.3V389.3M988.5 383.7V388.2M989.5 381.7V389.8M990.5 382.9V389.0M991.5 381.4V390.1M992.5 384.2V388.2M993.5 383.9V394.6M994.5 383.2V389.5M995.5 381.7V388.6M996.5 381.6V388.3M997.5 383.6V389.6M998.5 382.7V388.6M999.5 382.7V388.5M1000.5 379.1V390.0M1001.5 382.1V389.2M1002.5 383.4V391.9M1003.5 383.5V389.2M1004.5 382.7V390.7M1005.5 384.3V391.5M1006.5 383.0V388.7M1007.5 382.5V388.3M1008.5 383.1V393.5M1009.5 383.5V389.2M1010.5 383.4V388.9M1011.5 382.4V388.0M1012.5 384.3V387.9M1013.5 382.8V388.4M1014.5 383.5V390.8M1015.5 380.2V388.9M1016.5 383.5V388.2M1017.5 382.7V388.6M1018.5 384.7V388.0M1019.5 381.8V389.3M1020.5 383.6V390.1M1021.5 381.8V389.4M1022.5 382.6V388.4M1023.5 382.2V389.0M1024.5 384.6V388.4M1025.5 384.2V390.1M1026.5 384.7V387.9M1027.5 382.3V388.6M1028.5 383.9V392.2M1029.5 383.8V388.6M1030.5 381.0V388.7M1031.5 381.7V391.5M1032.5 382.1V389.0M1033.5 383.7V388.9M1034.5 383.7V388.3M1035.5 383.6V389.8M1036.5 383.3V387.9M1037.5 383.8V388.4M1038.5 381.2V389.3M1039.5 382.5V390.8M1040.5 380.6V388.7M1041.5 384.0V392.0M1042.5 377.8V391.0M1043.5 382.9V388.7M1044.5 381.9V392.7M1045.5 383.7V388.3M1046.5 383.8V389.8M1047.5 381.5V388.0M1048.5 383.6V390.4M1049.5 381.0V391.2M1050.5 384.2V389.1M1051.5 382.9V388.6M1052.5 380.4V391.4M1053.5 384.1V390.4M1054.5 381.4V388.1M1055.5 381.8V387.9M1056.5 383.6V387.8M1057.5 381.9V388.5M1058.5 379.6V388.2M1059.5 379.4V391.7M1060.5 383.3V389.8M1061.5 382.6V389.8M1062.5 381.0V389.3M1063.5 383.9V391.5M1064.5 380.8V388.0M1065.5 383.2V388.3M1066.5 383.2V389.7M1067.5 379.9V388.3M1068.5 383.8V388.8M1069.5 383.8V388.6M1070.5 383.2V389.6M1071.5 383.9V388.5M1072.5 382.1V390.1M1073.5 383.0V392.7M1074.5 383.6V391.7M1075.5 383.9V389.3M1076.5 383.8V388.6M1077.5 383.6V390.1M1078.5 383.8V388.8M1079.5 383.7V392.1M1080.5 380.7V388.8M1081.5 381.8V390.5M1082.5 377.3V390.9M1083.5 380.9V392.3M1084.5 377.8V397.4M1085.5 379.9V392.9M1086.5 377.4V392.9M1087.5 379.4V393.7M1088.5 380.4V390.5M1089.5 380.3V392.4M1090.5 382.9V387.9M1091.5 382.3V388.5M1092.5 381.4V390.4M1093.5 383.8V389.9M1094.5 382.8V389.2M1095.5 384.2V387.5M1096.5 382.3V389.1M1097.5 383.0V388.6M1098.5 384.5V389.7M1099.5 382.3V390.7M1100.5 383.2V387.7M1101.5 381.8V387.3M1102.5 384.3V387.4M1103.5 383.0V390.9M1104.5 383.9V388.5M1105.5 384.0V388.1M1106.5 383.9V388.4M1107.5 380.2V392.0M1108.5 383.6V387.6M1109.5 384.4V387.6M1110.5 381.5V390.2M1111.5 382.0V390.6M1112.5 383.3V388.1M1113.5 384.5V390.3M1114.5 383.0V387.9M1115.5 382.0V390.7M1116.5 380.3V387.8M1117.5 382.2V387.5M1118.5 384.0V387.4M1119.5 383.8V389.1M1120.5 381.6V388.8M1121.5 380.5V391.1M1122.5 380.7V388.4M1123.5 381.5V388.4M1124.5 384.1V392.7M1125.5 384.1V387.9M1126.5 382.0V387.6M1127.5 384.4V388.9M1128.5 384.2V391.8M1129.5 380.5V388.1M1130.5 383.2V389.8M1131.5 383.8V387.9M1132.5 384.5V388.1M1133.5 384.7V388.6M1134.5 382.0V391.4M1135.5 381.9V388.8M1136.5 384.6V387.9M1137.5 383.8V389.0M1138.5 384.0V388.4M1139.5 383.7V388.0M1140.5 384.3V387.7M1141.5 383.7V390.2M1142.5 381.6V387.9M1143.5 378.8V388.8M1144.5 382.6V388.7M1145.5 383.9V388.6M1146.5 380.1V388.9M1147.5 382.0V388.5M1148.5 382.6V389.4M1149.5 382.2V391.2M1150.5 383.3V388.4M1151.5 383.0V390.9M1152.5 382.8V390.1M1153.5 382.2V388.2M1154.5 383.1V392.2M1155.5 384.0V389.2M1156.5 383.4V389.6M1157.5 381.6V388.6M1158.5 383.8V389.6M1159.5 384.1V391.9M1160.5 384.1V388.1M1161.5 384.0V388.7M1162.5 382.3V387.7M1163.5 383.6V388.8M1164.5 381.2V387.5M1165.5 383.3V391.7M1166.5 384.2V387.6M1167.5 380.4V388.7M1168.5 381.6V390.0M1169.5 380.3V389.4M1170.5 383.8V388.9M1171.5 381.7V392.8M1172.5 382.8V388.6M1173.5 383.4V388.2M1174.5 383.1V388.4M1175.5 384.4V388.2M1176.5 384.6V392.5M1177.5 384.0V388.2M1178.5 384.2V393.0M1179.5 384.1V388.6M1180.5 384.4V389.0M1181.5 381.1V391.2M1182.5 384.4V389.4M1183.5 380.9V390.9M1184.5 377.6V388.2M1185.5 384.3V389.1M1186.5 383.4V387.5M1187.5 382.9V388.8M1188.5 384.0V389.2M1189.5 382.5V387.8M1190.5 383.9V388.4M1191.5 381.3V387.7M1192.5 384.3V387.6M1193.5 384.0V387.3M1194.5 384.5V388.6M1195.5 383.0V387.3M1196.5 384.3V388.8M1197.5 383.9V390.4M1198.5 383.5V387.6M1199.5 383.3V388.4M1200.5 382.9V389.0M1201.5 380.8V388.9M1202.5 384.1V391.6M1203.5 380.5V389.7M1204.5 382.8V389.8M1205.5 382.2V387.9M1206.5 384.0V388.8M1207.5 384.0V388.1M1208.5 381.9V388.4M1209.5 383.9V390.5M1210.5 380.7V388.2M1211.5 383.9V391.3M1212.5 384.0V388.8M1213.5 383.8V393.1M1214.5 382.4V392.1M1215.5 383.8V391.6M1216.5 380.9V387.5M1217.5 382.5V388.0M1218.5 384.0V387.6M1219.5 382.3V387.6M1220.5 384.4V388.2M1221.5 381.1V388.2M1222.5 384.0V390.0M1223.5 382.2V388.1M1224.5 384.6V392.8M1225.5 383.9V387.9M1226.5 381.0V388.7M1227.5 384.0V388.5M1228.5 383.8V388.1M1229.5 384.3V389.3M1230.5 384.0V387.6M1231.5 383.5V389.4M1232.5 384.3V387.6M1233.5 384.3V388.1M1234.5 383.4V389.4M1235.5 382.4V389.2M1236.5 384.3V387.9M1237.5 384.2V387.3M1238.5 384.8V390.4M1239.5 384.6V387.6M1240.5 384.5V388.8M1241.5 383.2V388.3M1242.5 384.5V388.8M1243.5 383.6V387.7M1244.5 381.9V387.3M1245.5 384.3V390.0M1246.5 381.9V387.5M1247.5 384.2V387.6M1248.5 384.0V387.7M1249.5 382.0V388.2M1250.5 384.4V389.2M1251.5 380.2V388.3M1252.5 383.6V391.5M1253.5 383.5V391.2M1254.5 383.5V388.0M1255.5 384.0V388.6M1256.5 384.4V387.3M1257.5 384.4V388.4M1258.5 380.6V388.7M1259.5 382.6V387.9M1260.5 382.2V387.5M1261.5 383.5V390.1M1262.5 383.2V387.8M1263.5 382.7V388.1M1264.5 383.6V389.4M1265.5 383.9V389.2M1266.5 381.3V389.7M1267.5 384.5V387.6M1268.5 382.9V387.8M1269.5 381.9V387.8M1270.5 384.5V387.7M1271.5 383.2V387.9M1272.5 384.8V390.9M1273.5 383.4V387.1M1274.5 382.7V389.6M1275.5 384.0V390.2M1276.5 384.2V388.0M1277.5 385.0V390.2M1278.5 384.2V388.0M1279.5 384.8V389.7M1280.5 383.1V387.3M1281.5 382.5V387.3M1282.5 384.1V387.3M1283.5 383.1V387.3M1284.5 384.4V387.2M1285.5 384.0V388.1M1286.5 380.0V387.6M1287.5 383.7V387.9M1288.5 384.1V388.5M1289.5 383.7V387.8M1290.5 384.5V388.6M1291.5 382.3V387.2M1292.5 383.6V387.3M1293.5 384.5V389.3M1294.5 383.2V387.4M1295.5 383.7V388.2M1296.5 383.3V387.4M1297.5 382.7V390.8M1298.5 383.8V391.3M1299.5 384.6V388.5M1300.5 384.5V387.5M1301.5 384.1V387.7M1302.5 380.7V388.5M1303.5 381.5V388.9M1304.5 383.9V389.4M1305.5 383.8V388.0M1306.5 381.9V387.5M1307.5 381.4V388.1M1308.5 384.2V387.3M1309.5 384.3V388.1M1310.5 383.6V387.9M1311.5 383.4V387.5M1312.5 384.4V388.0M1313.5 384.5V387.4M1314.5 383.3V389.7M1315.5 382.6V388.1M1316.5 384.2V389.7M1317.5 382.8V387.9M1318.5 384.4V389.1M1319.5 382.9V388.7M1320.5 384.9V389.5M1321.5 384.2V388.1M1322.5 384.3V388.6M1323.5 384.4V388.1M1324.5 383.9V387.9M1325.5 384.2V388.2M1326.5 384.1V387.9M1327.5 384.4V388.0M1328.5 383.0V387.6M1329.5 381.1V387.5M1330.5 384.3V389.2M1331.5 383.4V388.3M1332.5 383.8V389.9M1333.5 382.2V390.5M1334.5 378.5V388.9M1335.5 383.9V387.8M1336.5 382.3V387.3M1337.5 380.5V388.6M1338.5 384.3V389.8" stroke="#000000" stroke-width="1" fill="none" shape-rendering="crispEdges"/><rect x="1338" y="306" width="1" height="161" fill="#1010a0"/></svg>
<div class="a" style="left:56px;top:484px;width:1283px;height:166px;background:#fff"></div>
<svg class="a" style="left:0;top:0" width="1366" height="768"><rect x="56" y="505" width="1282" height="1" fill="#dcdcdc"/><rect x="56" y="525" width="1282" height="1" fill="#dcdcdc"/><rect x="56" y="546" width="1282" height="1" fill="#dcdcdc"/><rect x="56" y="567" width="1282" height="1" fill="#dcdcdc"/><rect x="56" y="587" width="1282" height="1" fill="#dcdcdc"/><rect x="56" y="608" width="1282" height="1" fill="#dcdcdc"/><rect x="56" y="628" width="1282" height="1" fill="#dcdcdc"/><rect x="56" y="649" width="1282" height="1" fill="#dcdcdc"/><rect x="120" y="484" width="1" height="166" fill="#dcdcdc"/><rect x="184" y="484" width="1" height="166" fill="#dcdcdc"/><rect x="248" y="484" width="1" height="166" fill="#dcdcdc"/><rect x="312" y="484" width="1" height="166" fill="#dcdcdc"/><rect x="376" y="484" width="1" height="166" fill="#dcdcdc"/><rect x="441" y="484" width="1" height="166" fill="#dcdcdc"/><rect x="505" y="484" width="1" height="166" fill="#dcdcdc"/><rect x="569" y="484" width="1" height="166" fill="#dcdcdc"/><rect x="633" y="484" width="1" height="166" fill="#dcdcdc"/><rect x="697" y="484" width="1" height="166" fill="#dcdcdc"/><rect x="761" y="484" width="1" height="166" fill="#dcdcdc"/><rect x="825" y="484" width="1" height="166" fill="#dcdcdc"/><rect x="889" y="484" width="1" height="166" fill="#dcdcdc"/><rect x="953" y="484" width="1" height="166" fill="#dcdcdc"/><rect x="1018" y="484" width="1" height="166" fill="#dcdcdc"/><rect x="1082" y="484" width="1" height="166" fill="#dcdcdc"/><rect x="1146" y="484" width="1" height="166" fill="#dcdcdc"/><rect x="1210" y="484" width="1" height="166" fill="#dcdcdc"/><rect x="1274" y="484" width="1" height="166" fill="#dcdcdc"/><rect x="55" y="483" width="1" height="167" fill="#a09a70"/><rect x="48" y="484" width="7" height="1" fill="#000"/><rect x="51" y="505" width="4" height="1" fill="#000"/><rect x="51" y="525" width="4" height="1" fill="#000"/><rect x="51" y="546" width="4" height="1" fill="#000"/><rect x="48" y="567" width="7" height="1" fill="#000"/><rect x="51" y="587" width="4" height="1" fill="#000"/><rect x="51" y="608" width="4" height="1" fill="#000"/><rect x="51" y="628" width="4" height="1" fill="#000"/><rect x="48" y="649" width="7" height="1" fill="#000"/><path d="M56.5 551.5V583.8M57.5 544.3V592.8M58.5 532.8V608.8M59.5 525.2V607.5M60.5 538.4V601.4M61.5 532.6V604.3M62.5 503.5V616.5M63.5 511.5V623.5M64.5 519.7V607.2M65.5 525.3V610.2M66.5 539.0V610.6M67.5 539.6V610.1M68.5 549.0V591.2M69.5 547.9V591.9M70.5 548.6V591.9M71.5 549.1V585.1M72.5 552.5V579.3M73.5 552.7V579.3M74.5 559.7V573.0M75.5 560.5V579.9M76.5 560.7V572.2M77.5 558.3V571.9M78.5 554.7V575.6M79.5 560.4V576.4M80.5 559.6V572.6M81.5 558.5V577.2M82.5 558.8V571.5M83.5 562.8V575.4M84.5 561.0V574.1M85.5 560.3V572.3M86.5 562.3V576.1M87.5 562.3V574.8M88.5 561.2V570.7M89.5 561.3V571.7M90.5 558.4V571.9M91.5 559.8V573.6M92.5 550.5V572.1M93.5 558.1V575.0M94.5 557.7V573.9M95.5 558.6V579.9M96.5 555.6V574.9M97.5 556.2V576.9M98.5 554.5V576.7M99.5 556.0V579.9M100.5 555.9V579.1M101.5 559.1V572.7M102.5 559.8V574.0M103.5 559.5V574.0M104.5 557.5V576.8M105.5 553.9V570.9M106.5 560.5V571.0M107.5 561.4V573.9M108.5 557.6V570.8M109.5 561.0V570.2M110.5 562.6V570.1M111.5 559.7V571.4M112.5 559.0V569.8M113.5 561.0V570.6M114.5 562.5V571.0M115.5 564.0V569.5M116.5 563.0V569.5M117.5 563.0V569.4M118.5 565.1V568.7M119.5 563.6V569.8M120.5 564.8V568.4M121.5 565.0V570.4M122.5 562.7V570.1M123.5 565.0V568.2M124.5 564.7V569.8M125.5 562.8V568.6M126.5 563.7V568.2M127.5 564.2V568.9M128.5 563.2V571.0M129.5 565.0V568.3M130.5 564.1V568.2M131.5 562.6V568.3M132.5 564.0V568.2M133.5 564.5V569.8M134.5 564.5V570.7M135.5 564.4V569.6M136.5 562.8V569.5M137.5 564.1V571.5M138.5 563.0V568.5M139.5 563.4V568.8M140.5 563.6V570.2M141.5 563.9V570.9M142.5 561.3V570.3M143.5 560.2V568.5M144.5 563.1V568.4M145.5 563.3V571.2M146.5 560.4V571.6M147.5 561.4V569.2M148.5 564.3V571.1M149.5 564.6V569.9M150.5 564.2V568.8M151.5 564.8V569.7M152.5 563.8V569.7M153.5 561.5V568.3M154.5 562.2V568.3M155.5 564.2V569.0M156.5 562.2V571.2M157.5 563.9V568.5M158.5 564.2V569.5M159.5 564.0V570.1M160.5 562.5V568.7M161.5 560.9V572.9M162.5 564.1V571.0M163.5 564.4V571.8M164.5 564.5V570.9M165.5 564.6V569.0M166.5 564.2V570.8M167.5 561.4V570.1M168.5 562.4V569.3M169.5 563.6V569.4M170.5 560.9V569.3M171.5 564.1V569.7M172.5 562.0V573.3M173.5 564.5V569.2M174.5 563.1V570.7M175.5 563.7V568.8M176.5 563.9V569.0M177.5 562.9V568.4M178.5 563.8V568.7M179.5 564.1V568.8M180.5 564.1V568.5M181.5 564.1V569.6M182.5 563.5V569.3M183.5 564.0V570.1M184.5 563.0V571.4M185.5 562.7V569.9M186.5 564.3V569.2M187.5 564.0V569.8M188.5 564.5V568.2M189.5 564.7V568.0M190.5 564.0V569.5M191.5 565.1V570.4M192.5 563.4V568.6M193.5 564.4V568.2M194.5 563.9V568.2M195.5 564.8V567.9M196.5 564.6V568.5M197.5 564.7V569.9M198.5 560.8V568.2M199.5 564.7V570.2M200.5 564.7V569.1M201.5 560.3V569.9M202.5 564.2V568.6M203.5 563.0V569.3M204.5 562.5V571.3M205.5 563.3V569.9M206.5 564.5V568.9M207.5 564.1V570.2M208.5 561.2V568.3M209.5 563.4V568.8M210.5 564.1V570.5M211.5 564.5V569.9M212.5 564.7V571.4M213.5 561.6V570.9M214.5 563.8V569.4M215.5 563.3V568.4M216.5 563.7V570.7M217.5 563.6V571.7M218.5 563.5V570.4M219.5 563.2V568.5M220.5 563.4V570.0M221.5 563.5V570.3M222.5 562.8V568.4M223.5 563.3V570.3M224.5 564.6V569.5M225.5 564.1V569.1M226.5 563.4V569.3M227.5 564.1V569.7M228.5 563.7V571.3M229.5 562.4V569.0M230.5 564.9V571.2M231.5 564.9V569.0M232.5 562.4V569.7M233.5 564.2V568.4M234.5 564.6V569.9M235.5 564.7V570.0M236.5 563.4V569.6M237.5 564.5V572.3M238.5 564.6V568.8M239.5 564.6V570.8M240.5 564.2V571.2M241.5 564.8V569.4M242.5 564.4V568.7M243.5 564.3V569.5M244.5 564.8V568.9M245.5 563.9V568.7M246.5 564.4V570.9M247.5 564.3V568.8M248.5 561.9V572.2M249.5 564.2V570.5M250.5 562.9V569.3M251.5 562.9V574.8M252.5 564.2V569.3M253.5 563.2V570.7M254.5 563.6V571.6M255.5 564.1V569.9M256.5 564.3V571.0M257.5 564.4V569.9M258.5 563.4V571.8M259.5 564.7V569.2M260.5 563.2V570.6M261.5 563.0V569.6M262.5 561.0V571.6M263.5 561.8V571.2M264.5 562.0V569.9M265.5 562.8V570.6M266.5 563.3V571.7M267.5 564.4V569.4M268.5 564.1V568.9M269.5 562.4V570.0M270.5 563.7V572.4M271.5 562.4V571.3M272.5 563.5V572.3M273.5 563.6V570.4M274.5 563.9V569.2M275.5 563.3V568.9M276.5 564.1V568.8M277.5 564.1V568.3M278.5 562.5V568.3M279.5 562.2V568.5M280.5 562.8V569.4M281.5 563.0V569.7M282.5 562.2V571.5M283.5 561.1V568.3M284.5 564.1V569.8M285.5 562.5V568.9M286.5 561.4V568.7M287.5 561.2V569.3M288.5 561.6V569.7M289.5 561.9V568.9M290.5 560.5V570.6M291.5 562.6V568.4M292.5 563.7V568.6M293.5 564.6V569.9M294.5 565.0V570.2M295.5 564.5V569.1M296.5 564.7V569.2M297.5 564.4V570.2M298.5 563.9V568.7M299.5 563.1V570.5M300.5 564.0V571.2M301.5 564.8V573.3M302.5 563.1V568.2M303.5 563.4V569.0M304.5 564.1V569.0M305.5 562.4V568.2M306.5 564.2V568.6M307.5 564.7V568.7M308.5 564.5V569.6M309.5 565.2V568.2M310.5 564.5V568.0M311.5 562.9V567.9M312.5 563.8V568.4M313.5 563.6V569.6M314.5 564.3V567.9M315.5 563.1V568.8M316.5 564.9V569.2M317.5 564.1V568.8M318.5 564.4V568.9M319.5 564.3V570.3M320.5 562.2V568.7M321.5 564.4V569.2M322.5 563.7V568.4M323.5 564.0V568.1M324.5 563.5V568.0M325.5 562.1V568.6M326.5 564.7V568.1M327.5 564.7V569.5M328.5 563.7V568.8M329.5 564.2V568.1M330.5 562.7V567.9M331.5 563.5V568.8M332.5 564.6V569.5M333.5 564.8V568.8M334.5 563.8V568.3M335.5 564.1V568.8M336.5 564.8V571.2M337.5 562.8V570.4M338.5 564.5V569.9M339.5 564.5V570.0M340.5 564.3V570.5M341.5 562.7V568.8M342.5 564.3V569.0M343.5 563.0V570.0M344.5 564.5V568.2M345.5 564.2V570.0M346.5 563.0V568.6M347.5 562.3V569.3M348.5 562.5V572.7M349.5 561.0V569.0M350.5 564.0V570.9M351.5 562.8V568.9M352.5 563.7V568.8M353.5 564.9V568.9M354.5 563.2V572.0M355.5 563.1V569.6M356.5 564.3V568.2M357.5 564.5V568.4M358.5 563.1V569.3M359.5 563.6V568.2M360.5 564.7V570.0M361.5 561.8V568.3M362.5 564.3V570.6M363.5 563.4V570.1M364.5 561.8V571.2M365.5 564.4V568.3M366.5 563.5V568.7M367.5 564.0V569.0M368.5 561.6V572.4M369.5 561.9V571.3M370.5 564.2V569.0M371.5 563.5V570.1M372.5 562.2V570.2M373.5 560.9V574.5M374.5 562.4V571.4M375.5 560.8V572.6M376.5 562.8V572.1M377.5 560.8V570.8M378.5 561.1V569.7M379.5 559.8V572.3M380.5 562.3V569.4M381.5 559.2V570.5M382.5 558.6V570.8M383.5 562.3V572.6M384.5 560.9V571.5M385.5 562.1V572.3M386.5 561.4V571.6M387.5 562.3V570.3M388.5 562.9V569.9M389.5 562.9V571.1M390.5 563.3V574.5M391.5 562.2V573.8M392.5 561.7V578.3M393.5 562.4V570.7M394.5 562.7V570.2M395.5 562.9V570.6M396.5 561.0V571.7M397.5 561.7V571.1M398.5 558.9V572.2M399.5 558.2V570.0M400.5 558.3V570.3M401.5 562.6V574.3M402.5 562.2V570.8M403.5 562.6V573.5M404.5 561.1V576.7M405.5 560.2V572.5M406.5 561.0V574.3M407.5 552.5V574.4M408.5 557.7V571.9M409.5 560.5V575.1M410.5 560.9V572.4M411.5 559.1V574.9M412.5 558.5V572.3M413.5 559.9V571.1M414.5 561.8V571.8M415.5 561.8V571.4M416.5 561.7V571.8M417.5 562.0V573.6M418.5 558.5V573.4M419.5 560.7V573.1M420.5 558.1V571.2M421.5 559.3V574.1M422.5 561.0V570.7M423.5 561.9V570.9M424.5 559.9V571.3M425.5 556.2V573.9M426.5 558.6V573.9M427.5 558.4V571.5M428.5 557.6V573.1M429.5 556.7V572.7M430.5 562.1V575.8M431.5 558.1V573.7M432.5 561.1V574.2M433.5 562.0V574.7M434.5 561.7V573.5M435.5 561.9V572.5M436.5 561.0V571.3M437.5 562.6V572.5M438.5 560.2V571.6M439.5 561.9V571.3M440.5 561.7V575.5M441.5 561.8V571.6M442.5 559.9V573.6M443.5 560.8V572.6M444.5 559.6V571.5M445.5 561.1V571.2M446.5 561.4V573.0M447.5 562.0V573.3M448.5 560.8V571.3M449.5 560.3V572.0M450.5 559.9V572.8M451.5 561.6V573.4M452.5 561.9V572.2M453.5 559.7V574.6M454.5 560.6V577.7M455.5 561.8V574.4M456.5 561.4V573.5M457.5 561.4V573.3M458.5 562.1V575.3M459.5 561.9V575.7M460.5 560.6V572.7M461.5 560.3V573.4M462.5 560.2V574.8M463.5 559.7V574.1M464.5 556.2V574.0M465.5 560.1V574.8M466.5 561.1V576.0M467.5 560.4V572.6M468.5 560.5V571.5M469.5 554.4V572.9M470.5 557.9V572.2M471.5 561.1V571.8M472.5 560.4V572.7M473.5 561.1V572.4M474.5 559.9V572.1M475.5 559.2V576.0M476.5 558.8V578.7M477.5 559.8V577.1M478.5 560.1V577.4M479.5 560.4V577.0M480.5 558.0V573.0M481.5 560.9V572.3M482.5 556.8V576.1M483.5 555.5V575.1M484.5 558.7V573.9M485.5 558.4V575.5M486.5 553.5V576.1M487.5 559.1V574.4M488.5 557.9V577.9M489.5 557.0V574.5M490.5 559.3V575.6M491.5 557.6V573.8M492.5 555.8V574.5M493.5 559.2V573.0M494.5 560.2V575.8M495.5 561.4V574.4M496.5 554.9V574.0M497.5 559.5V571.9M498.5 560.8V573.7M499.5 556.6V573.1M500.5 557.8V573.7M501.5 559.6V575.3M502.5 555.7V573.9M503.5 556.8V575.5M504.5 553.3V577.8M505.5 558.5V576.5M506.5 554.1V575.9M507.5 556.1V574.5M508.5 555.6V578.6M509.5 555.7V577.4M510.5 552.0V576.7M511.5 548.8V579.5M512.5 551.9V575.9M513.5 553.7V581.4M514.5 548.4V580.5M515.5 550.7V580.7M516.5 549.6V580.6M517.5 552.1V579.7M518.5 551.7V579.9M519.5 550.0V585.6M520.5 552.8V584.3M521.5 550.3V578.1M522.5 549.0V580.1M523.5 546.3V582.7M524.5 549.6V582.6M525.5 549.8V582.5M526.5 549.0V588.4M527.5 550.5V584.6M528.5 552.5V583.8M529.5 543.4V585.3M530.5 552.4V585.3M531.5 546.6V583.0M532.5 549.3V580.6M533.5 554.0V582.6M534.5 553.4V579.3M535.5 548.6V579.1M536.5 555.5V580.0M537.5 554.9V580.1M538.5 552.8V579.4M539.5 550.1V581.4M540.5 552.4V579.2M541.5 553.4V578.4M542.5 552.2V579.0M543.5 551.4V581.8M544.5 553.4V580.9M545.5 553.3V575.8M546.5 554.7V580.6M547.5 554.0V575.9M548.5 554.8V577.4M549.5 551.7V577.6M550.5 545.4V581.1M551.5 553.1V582.3M552.5 555.7V584.2M553.5 552.7V587.0M554.5 550.5V582.1M555.5 549.0V582.1M556.5 546.2V581.4M557.5 548.2V581.0M558.5 547.5V580.1M559.5 552.4V579.9M560.5 553.5V583.5M561.5 554.9V581.6M562.5 552.6V584.1M563.5 550.8V584.3M564.5 549.8V581.1M565.5 552.8V580.1M566.5 549.6V579.1M567.5 543.8V579.4M568.5 544.1V582.6M569.5 539.5V583.2M570.5 545.9V583.5M571.5 542.3V595.6M572.5 538.6V584.6M573.5 544.2V583.9M574.5 538.1V587.2M575.5 537.7V586.2M576.5 544.8V583.1M577.5 544.7V587.9M578.5 544.7V595.8M579.5 537.7V585.4M580.5 545.4V582.7M581.5 539.1V584.9M582.5 546.8V581.5M583.5 547.4V582.0M584.5 546.3V586.1M585.5 549.5V585.6M586.5 548.1V584.8M587.5 545.3V582.0M588.5 549.2V581.3M589.5 552.5V584.8M590.5 552.5V582.1M591.5 551.1V579.9M592.5 549.7V583.1M593.5 552.0V580.8M594.5 549.2V579.2M595.5 547.2V581.2M596.5 548.7V584.3M597.5 547.7V589.1M598.5 549.7V583.9M599.5 549.4V585.3M600.5 546.2V581.3M601.5 552.4V581.4M602.5 548.7V585.3M603.5 550.6V583.9M604.5 547.3V583.2M605.5 547.3V585.4M606.5 540.8V585.1M607.5 536.6V584.9M608.5 538.5V584.8M609.5 543.1V586.4M610.5 548.7V585.2M611.5 549.7V586.1M612.5 552.3V589.9M613.5 547.9V586.3M614.5 547.3V586.0M615.5 547.2V589.6M616.5 545.7V588.0M617.5 548.2V583.5M618.5 546.7V599.5M619.5 529.6V586.9M620.5 546.5V588.4M621.5 543.2V593.2M622.5 544.0V593.6M623.5 541.1V586.9M624.5 543.7V593.7M625.5 544.2V591.1M626.5 545.1V585.2M627.5 545.1V580.2M628.5 549.0V586.3M629.5 548.3V582.3M630.5 546.6V582.8M631.5 546.1V580.0M632.5 546.1V582.4M633.5 548.1V582.6M634.5 547.9V585.9M635.5 551.3V588.7M636.5 548.1V585.9M637.5 548.8V587.9M638.5 547.7V588.7M639.5 546.2V584.6M640.5 529.9V585.0M641.5 541.5V584.0M642.5 535.1V587.0M643.5 544.4V585.3M644.5 540.3V590.4M645.5 544.8V587.6M646.5 544.5V587.2M647.5 544.5V585.6M648.5 545.9V583.8M649.5 539.8V588.3M650.5 540.2V586.2M651.5 543.1V584.5M652.5 540.0V583.3M653.5 545.3V585.8M654.5 541.0V584.8M655.5 544.1V584.7M656.5 545.1V589.0M657.5 547.8V589.7M658.5 548.6V590.2M659.5 547.5V587.4M660.5 547.5V584.5M661.5 548.4V582.2M662.5 550.6V585.4M663.5 549.4V590.6M664.5 549.0V589.7M665.5 547.4V586.4M666.5 547.2V592.4M667.5 539.1V587.8M668.5 549.2V587.0M669.5 549.3V588.2M670.5 548.2V587.2M671.5 549.6V595.4M672.5 547.0V588.4M673.5 549.3V594.7M674.5 550.8V582.9M675.5 550.5V588.3M676.5 548.9V596.9M677.5 549.0V585.6M678.5 549.5V587.2M679.5 552.3V584.3M680.5 550.5V584.0M681.5 551.3V584.2M682.5 552.9V584.8M683.5 552.4V583.1M684.5 550.6V579.8M685.5 551.1V580.8M686.5 555.6V579.9M687.5 553.7V579.6M688.5 555.5V580.1M689.5 553.1V580.4M690.5 555.5V582.0M691.5 553.1V579.5M692.5 554.5V584.1M693.5 556.6V578.6M694.5 554.1V575.9M695.5 552.3V577.0M696.5 550.8V576.6M697.5 556.4V576.8M698.5 554.3V579.4M699.5 550.6V577.8M700.5 553.3V584.9M701.5 552.1V580.5M702.5 549.0V581.3M703.5 552.1V579.7M704.5 553.4V582.5M705.5 550.0V581.6M706.5 551.9V583.0M707.5 549.7V581.7M708.5 549.0V581.7M709.5 554.6V580.2M710.5 555.1V579.4M711.5 551.2V577.7M712.5 550.6V579.4M713.5 551.5V580.7M714.5 552.4V579.9M715.5 546.4V580.7M716.5 553.8V579.2M717.5 552.2V582.0M718.5 554.9V579.8M719.5 550.4V579.1M720.5 551.3V579.4M721.5 549.5V581.7M722.5 550.1V580.8M723.5 549.8V592.9M724.5 550.7V584.3M725.5 545.2V589.2M726.5 546.5V591.9M727.5 551.5V591.0M728.5 553.3V583.0M729.5 548.6V591.9M730.5 556.3V583.1M731.5 557.0V582.5M732.5 556.9V579.9M733.5 554.2V582.0M734.5 554.2V583.7M735.5 555.4V589.0M736.5 553.8V582.0M737.5 548.3V581.5M738.5 550.5V584.0M739.5 542.7V582.0M740.5 552.1V580.3M741.5 545.4V580.0M742.5 550.8V584.6M743.5 541.8V580.9M744.5 551.2V580.5M745.5 544.3V580.4M746.5 553.5V583.1M747.5 553.4V578.4M748.5 554.1V577.5M749.5 556.0V581.2M750.5 557.4V578.8M751.5 556.8V577.4M752.5 555.2V582.4M753.5 554.7V583.7M754.5 551.7V584.0M755.5 555.5V581.4M756.5 553.1V580.2M757.5 550.6V585.7M758.5 555.2V581.6M759.5 553.4V578.9M760.5 551.3V578.8M761.5 554.2V581.6M762.5 548.2V578.2M763.5 550.2V583.6M764.5 551.9V582.5M765.5 555.0V581.4M766.5 554.8V581.6M767.5 553.7V581.5M768.5 553.4V580.8M769.5 554.1V579.4M770.5 552.4V577.9M771.5 557.0V575.7M772.5 557.8V575.1M773.5 556.4V575.5M774.5 552.4V577.5M775.5 558.1V576.9M776.5 557.7V578.1M777.5 553.8V581.1M778.5 553.8V580.7M779.5 551.4V578.7M780.5 555.7V576.8M781.5 557.2V580.2M782.5 551.7V587.4M783.5 553.6V582.5M784.5 549.2V578.2M785.5 551.4V581.5M786.5 554.7V583.9M787.5 548.7V578.5M788.5 548.1V578.2M789.5 553.1V576.8M790.5 553.3V577.3M791.5 558.6V579.2M792.5 558.1V579.1M793.5 559.9V575.7M794.5 558.4V576.6M795.5 554.1V575.0M796.5 560.2V575.0M797.5 559.8V572.6M798.5 560.6V576.8M799.5 560.5V572.2M800.5 560.2V571.8M801.5 557.9V576.2M802.5 561.4V575.1M803.5 557.7V573.4M804.5 558.1V572.6M805.5 557.6V572.3M806.5 552.8V576.6M807.5 558.2V572.8M808.5 556.8V572.7M809.5 558.3V573.9M810.5 557.8V574.8M811.5 555.9V573.9M812.5 560.0V573.5M813.5 560.1V572.7M814.5 556.2V572.3M815.5 560.2V574.4M816.5 556.3V573.8M817.5 560.4V574.3M818.5 556.5V576.5M819.5 558.9V577.8M820.5 559.0V577.8M821.5 556.9V572.5M822.5 554.1V574.8M823.5 555.4V576.5M824.5 557.6V576.0M825.5 558.1V575.8M826.5 559.2V576.9M827.5 554.6V574.3M828.5 557.5V575.2M829.5 557.8V572.4M830.5 559.3V574.2M831.5 559.5V574.6M832.5 554.2V576.3M833.5 555.6V578.3M834.5 553.2V577.1M835.5 557.8V577.9M836.5 553.2V577.1M837.5 556.6V576.2M838.5 557.8V575.4M839.5 553.9V577.4M840.5 555.3V574.9M841.5 556.1V576.7M842.5 551.5V575.9M843.5 552.6V584.3M844.5 545.9V578.0M845.5 555.3V578.5M846.5 556.2V578.9M847.5 550.7V575.5M848.5 555.9V575.8M849.5 555.5V577.0M850.5 557.3V581.9M851.5 556.5V580.7M852.5 558.0V575.7M853.5 558.8V576.2M854.5 556.9V575.3M855.5 558.3V574.7M856.5 559.2V574.8M857.5 556.6V574.1M858.5 559.3V575.2M859.5 557.5V575.7M860.5 556.1V574.5M861.5 556.6V576.6M862.5 552.6V576.7M863.5 548.6V576.2M864.5 551.2V581.7M865.5 555.9V581.4M866.5 556.4V582.2M867.5 553.7V578.0M868.5 553.5V573.9M869.5 554.2V575.1M870.5 554.7V573.6M871.5 557.0V574.4M872.5 555.4V578.8M873.5 553.2V574.9M874.5 553.4V577.8M875.5 558.4V575.2M876.5 556.5V576.2M877.5 554.4V576.0M878.5 553.6V579.5M879.5 554.4V576.4M880.5 556.8V579.0M881.5 547.0V578.6M882.5 556.8V575.7M883.5 556.7V578.6M884.5 557.0V578.3M885.5 556.7V579.3M886.5 556.4V579.5M887.5 553.5V581.2M888.5 550.6V577.3M889.5 551.8V582.2M890.5 552.6V579.7M891.5 556.6V574.2M892.5 558.0V574.6M893.5 559.3V573.5M894.5 558.4V576.1M895.5 558.8V576.7M896.5 554.1V577.3M897.5 557.8V574.4M898.5 555.1V573.7M899.5 558.4V577.5M900.5 554.3V574.3M901.5 557.1V576.1M902.5 558.6V576.9M903.5 554.5V580.4M904.5 552.1V574.7M905.5 558.6V580.7M906.5 556.7V581.3M907.5 553.6V584.4M908.5 558.0V577.8M909.5 552.3V576.6M910.5 558.6V577.4M911.5 557.0V577.3M912.5 554.5V577.0M913.5 552.6V579.8M914.5 552.5V579.6M915.5 555.8V575.8M916.5 556.0V574.1M917.5 552.3V573.0M918.5 555.2V572.9M919.5 556.2V573.9M920.5 551.0V579.6M921.5 553.0V576.5M922.5 556.9V576.0M923.5 555.8V576.3M924.5 555.6V583.2M925.5 554.0V579.7M926.5 554.4V580.6M927.5 554.2V582.0M928.5 557.4V576.3M929.5 557.5V577.1M930.5 555.4V583.9M931.5 557.6V583.2M932.5 556.8V580.5M933.5 556.8V578.0M934.5 556.8V578.0M935.5 555.8V579.0M936.5 558.6V578.9M937.5 559.4V584.7M938.5 555.5V574.8M939.5 556.0V578.6M940.5 558.2V574.1M941.5 555.2V573.8M942.5 556.5V580.6M943.5 559.7V578.6M944.5 555.6V584.2M945.5 555.6V577.0M946.5 556.0V577.4M947.5 558.7V575.7M948.5 559.3V579.5M949.5 559.2V575.1M950.5 558.2V574.9M951.5 558.7V574.7M952.5 558.4V575.8M953.5 558.2V574.5M954.5 558.7V575.0M955.5 556.8V576.5M956.5 559.5V577.3M957.5 555.9V576.0M958.5 557.6V578.9M959.5 558.3V577.0M960.5 557.8V573.3M961.5 558.2V576.2M962.5 559.8V573.6M963.5 559.2V575.9M964.5 559.4V572.5M965.5 557.7V572.6M966.5 557.9V573.8M967.5 559.8V573.4M968.5 556.3V577.8M969.5 559.9V576.3M970.5 560.1V573.5M971.5 558.8V572.3M972.5 557.7V574.3M973.5 559.0V574.0M974.5 559.2V576.3M975.5 553.2V573.5M976.5 558.7V573.5M977.5 559.7V576.0M978.5 556.3V573.8M979.5 557.2V573.7M980.5 557.9V573.7M981.5 557.8V572.0M982.5 559.3V571.4M983.5 558.5V574.2M984.5 557.2V571.5M985.5 561.1V573.5M986.5 561.7V574.4M987.5 560.0V574.7M988.5 560.2V575.0M989.5 558.1V574.3M990.5 560.0V572.3M991.5 559.8V577.4M992.5 560.7V571.3M993.5 558.8V572.7M994.5 560.6V571.8M995.5 561.2V572.6M996.5 561.5V570.8M997.5 563.4V573.6M998.5 563.4V569.9M999.5 559.1V571.4M1000.5 562.5V570.0M1001.5 562.7V572.6M1002.5 560.4V569.7M1003.5 562.5V571.4M1004.5 563.4V574.3M1005.5 560.9V574.0M1006.5 563.4V573.2M1007.5 559.9V573.9M1008.5 562.8V570.1M1009.5 561.6V573.1M1010.5 563.6V570.0M1011.5 563.8V572.3M1012.5 563.2V570.4M1013.5 562.7V573.2M1014.5 562.0V570.3M1015.5 563.6V571.8M1016.5 561.4V573.9M1017.5 559.9V571.7M1018.5 560.8V572.1M1019.5 564.3V569.3M1020.5 561.7V568.7M1021.5 560.8V571.6M1022.5 562.9V571.1M1023.5 563.6V572.5M1024.5 562.6V570.6M1025.5 561.1V571.3M1026.5 562.3V572.0M1027.5 564.0V572.9M1028.5 563.4V572.2M1029.5 563.5V569.9M1030.5 560.1V569.3M1031.5 561.9V571.2M1032.5 561.0V571.2M1033.5 560.5V573.9M1034.5 556.6V573.3M1035.5 532.5V603.5M1036.5 554.6V579.6M1037.5 555.1V581.1M1038.5 536.5V596.5M1039.5 553.3V579.7M1040.5 554.3V585.0M1041.5 550.5V585.6M1042.5 553.2V586.7M1043.5 551.7V589.5M1044.5 551.8V586.0M1045.5 548.1V584.4M1046.5 538.5V600.5M1047.5 550.9V591.7M1048.5 551.8V588.1M1049.5 549.6V590.0M1050.5 550.6V583.9M1051.5 550.0V586.9M1052.5 551.6V584.8M1053.5 550.2V583.6M1054.5 546.9V582.6M1055.5 548.3V587.0M1056.5 541.1V591.3M1057.5 543.6V591.3M1058.5 534.5V602.5M1059.5 543.0V592.1M1060.5 548.1V589.2M1061.5 550.0V586.3M1062.5 550.8V584.9M1063.5 540.7V586.3M1064.5 548.4V585.8M1065.5 528.5V596.5M1066.5 550.7V586.4M1067.5 546.2V589.4M1068.5 544.0V590.1M1069.5 538.8V593.3M1070.5 530.5V606.5M1071.5 539.7V589.5M1072.5 542.9V590.4M1073.5 539.4V587.4M1074.5 545.6V586.3M1075.5 541.5V586.9M1076.5 543.7V586.7M1077.5 535.8V598.3M1078.5 533.7V605.5M1079.5 530.0V601.9M1080.5 508.5V621.5M1081.5 512.3V630.0M1082.5 521.6V617.7M1083.5 490.5V626.5M1084.5 506.5V644.5M1085.5 532.5V604.4M1086.5 516.5V624.5M1087.5 531.7V609.4M1088.5 527.3V606.8M1089.5 529.1V601.0M1090.5 537.1V597.1M1091.5 543.4V600.9M1092.5 540.9V597.1M1093.5 543.9V594.9M1094.5 539.3V594.5M1095.5 528.5V606.5M1096.5 549.1V584.7M1097.5 549.8V587.3M1098.5 547.2V588.6M1099.5 548.7V589.1M1100.5 548.0V592.7M1101.5 548.6V587.2M1102.5 536.5V600.5M1103.5 552.0V583.5M1104.5 550.0V587.6M1105.5 545.6V590.7M1106.5 547.8V588.6M1107.5 544.7V582.8M1108.5 548.9V581.5M1109.5 540.6V584.4M1110.5 539.7V591.1M1111.5 539.4V588.8M1112.5 540.5V590.8M1113.5 547.3V591.5M1114.5 548.3V583.5M1115.5 548.6V582.1M1116.5 549.5V582.2M1117.5 551.7V580.7M1118.5 555.0V584.3M1119.5 553.6V583.6M1120.5 547.7V582.7M1121.5 552.8V583.3M1122.5 551.7V583.4M1123.5 550.9V580.6M1124.5 548.1V580.5M1125.5 550.5V580.9M1126.5 549.3V584.2M1127.5 552.1V584.6M1128.5 555.4V581.0M1129.5 551.5V580.3M1130.5 550.7V581.4M1131.5 551.2V581.1M1132.5 552.8V578.5M1133.5 553.1V584.9M1134.5 554.6V582.5M1135.5 554.8V580.0M1136.5 553.8V579.6M1137.5 548.4V578.6M1138.5 555.1V579.0M1139.5 554.0V579.0M1140.5 556.5V579.4M1141.5 556.8V575.5M1142.5 556.4V575.0M1143.5 557.2V575.6M1144.5 555.0V575.9M1145.5 555.8V582.1M1146.5 556.4V577.2M1147.5 553.7V580.2M1148.5 559.1V577.7M1149.5 559.6V577.3M1150.5 558.6V574.5M1151.5 558.8V573.7M1152.5 558.5V572.5M1153.5 559.7V575.4M1154.5 560.3V574.2M1155.5 560.4V572.7M1156.5 551.3V574.4M1157.5 558.2V573.7M1158.5 559.4V572.3M1159.5 559.6V572.5M1160.5 557.8V574.8M1161.5 556.2V572.7M1162.5 557.3V572.0M1163.5 561.5V573.9M1164.5 560.5V572.1M1165.5 562.5V572.3M1166.5 562.7V572.9M1167.5 562.2V576.1M1168.5 562.7V571.9M1169.5 561.3V572.1M1170.5 558.8V571.4M1171.5 562.4V573.0M1172.5 558.2V571.4M1173.5 558.0V573.7M1174.5 561.3V573.2M1175.5 560.0V571.9M1176.5 561.9V575.3M1177.5 562.2V576.8M1178.5 561.6V577.4M1179.5 563.2V571.9M1180.5 561.3V573.2M1181.5 562.9V570.2M1182.5 562.4V573.5M1183.5 561.8V577.1M1184.5 561.0V572.3M1185.5 561.4V569.4M1186.5 561.1V572.1M1187.5 563.4V569.8M1188.5 564.5V569.4M1189.5 564.7V569.0M1190.5 564.3V572.0M1191.5 563.7V568.7M1192.5 563.1V570.1M1193.5 563.7V568.8M1194.5 563.8V568.4M1195.5 564.3V569.9M1196.5 561.4V568.7M1197.5 564.0V572.3M1198.5 564.2V569.9M1199.5 561.3V570.7M1200.5 561.7V571.5M1201.5 562.7V569.7M1202.5 564.8V574.7M1203.5 563.7V570.5M1204.5 564.0V572.2M1205.5 564.4V570.2M1206.5 561.3V571.9M1207.5 561.0V574.0M1208.5 562.4V571.7M1209.5 564.5V569.6M1210.5 560.8V568.6M1211.5 562.3V570.9M1212.5 561.4V572.0M1213.5 561.8V568.9M1214.5 563.8V569.0M1215.5 564.5V569.6M1216.5 564.7V570.5M1217.5 563.9V570.5M1218.5 562.3V569.4M1219.5 563.9V568.6M1220.5 564.6V568.8M1221.5 561.8V570.2M1222.5 563.2V569.5M1223.5 563.0V568.0M1224.5 563.3V568.9M1225.5 561.8V568.8M1226.5 563.6V568.4M1227.5 564.0V569.0M1228.5 562.7V568.9M1229.5 563.6V568.7M1230.5 561.7V569.6M1231.5 563.3V571.5M1232.5 563.4V569.0M1233.5 563.4V569.4M1234.5 562.4V569.1M1235.5 564.0V572.3M1236.5 561.5V569.0M1237.5 563.2V569.1M1238.5 562.0V570.4M1239.5 563.7V570.6M1240.5 563.4V572.6M1241.5 561.4V571.2M1242.5 564.1V570.6M1243.5 560.8V569.5M1244.5 564.5V569.6M1245.5 564.7V570.3M1246.5 564.2V568.1M1247.5 564.3V571.2M1248.5 564.3V568.7M1249.5 564.2V568.5M1250.5 564.1V569.9M1251.5 564.1V568.5M1252.5 563.4V570.6M1253.5 562.9V568.2M1254.5 562.8V569.9M1255.5 563.9V569.5M1256.5 564.3V568.7M1257.5 563.4V569.4M1258.5 561.4V569.3M1259.5 564.0V568.9M1260.5 563.0V568.3M1261.5 563.8V570.1M1262.5 563.7V570.2M1263.5 560.9V569.0M1264.5 563.2V568.9M1265.5 564.3V568.8M1266.5 561.3V569.3M1267.5 562.1V568.5M1268.5 563.7V571.0M1269.5 563.0V569.0M1270.5 562.5V568.6M1271.5 564.1V571.8M1272.5 564.0V569.6M1273.5 561.2V569.5M1274.5 562.1V569.6M1275.5 563.7V569.2M1276.5 562.6V569.4M1277.5 561.8V569.9M1278.5 565.2V570.1M1279.5 564.1V568.0M1280.5 564.6V568.0M1281.5 564.9V568.0M1282.5 562.9V568.0M1283.5 563.1V569.4M1284.5 564.3V569.5M1285.5 563.7V568.2M1286.5 562.0V570.9M1287.5 564.5V570.6M1288.5 564.2V570.8M1289.5 560.7V568.1M1290.5 564.5V570.7M1291.5 563.9V573.5M1292.5 563.5V572.3M1293.5 561.2V571.5M1294.5 563.7V569.4M1295.5 563.8V571.5M1296.5 563.2V568.8M1297.5 563.2V571.2M1298.5 563.5V568.3M1299.5 564.5V568.3M1300.5 561.6V568.0M1301.5 563.8V569.1M1302.5 563.8V568.1M1303.5 561.9V571.0M1304.5 563.7V568.6M1305.5 562.6V568.5M1306.5 561.2V568.6M1307.5 561.1V568.0M1308.5 562.6V570.5M1309.5 564.3V569.0M1310.5 564.6V568.8M1311.5 564.7V569.6M1312.5 563.0V568.9M1313.5 563.0V570.4M1314.5 564.9V569.0M1315.5 564.8V568.9M1316.5 563.9V568.1M1317.5 564.8V568.3M1318.5 564.3V569.6M1319.5 564.9V568.4M1320.5 563.8V568.5M1321.5 564.9V567.8M1322.5 563.1V570.3M1323.5 564.5V569.9M1324.5 563.7V569.9M1325.5 563.6V568.2M1326.5 564.4V569.6M1327.5 563.4V568.4M1328.5 564.6V568.5M1329.5 561.9V568.6M1330.5 564.7V571.6M1331.5 563.2V569.1M1332.5 564.2V570.3M1333.5 564.7V569.6M1334.5 564.2V571.0M1335.5 561.4V571.3M1336.5 564.3V569.5M1337.5 563.7V568.6M1338.5 563.8V568.6" stroke="#ff0000" stroke-width="1" fill="none" shape-rendering="crispEdges"/><rect x="1338" y="484" width="1" height="166" fill="#1010a0"/></svg>
<div class="chh" style="left:62px;top:112px">Channel 1</div>
<div class="a" style="left:56px;top:128px;width:6px;height:1px;background:#a09a70"></div>
<div class="a" style="left:170px;top:128px;width:6px;height:1px;background:#a09a70"></div>
<div class="a" style="left:195px;top:128px;width:4px;height:1px;background:#a09a70"></div>
<div class="a" style="left:218px;top:128px;width:4px;height:1px;background:#a09a70"></div>
<div class="a" style="left:242px;top:128px;width:20px;height:1px;background:#a09a70"></div>
<div class="a" style="left:285px;top:128px;width:8px;height:1px;background:#a09a70"></div>
<div class="a" style="left:312px;top:128px;width:6px;height:1px;background:#a09a70"></div>
<div class="a" style="left:342px;top:128px;width:774px;height:1px;background:#a09a70"></div>
<svg class="a" style="left:176px;top:111px" width="16" height="16" viewBox="0 0 16 16"><circle cx="6.5" cy="7" r="5" fill="#fff" stroke="#000" stroke-width="1.1"/><path d="M10 10.5 L14 14.5" stroke="#000" stroke-width="2.6"/><path d="M10.5 10.3 L13.8 13.6" stroke="#808080" stroke-width="0.8"/><path d="M4 7H9M6.5 4.5V9.5" stroke="#e00000" stroke-width="1.3"/></svg>
<svg class="a" style="left:199px;top:111px" width="16" height="16" viewBox="0 0 16 16"><circle cx="6.5" cy="7" r="5" fill="#fff" stroke="#000" stroke-width="1.1"/><path d="M10 10.5 L14 14.5" stroke="#000" stroke-width="2.6"/><path d="M10.5 10.3 L13.8 13.6" stroke="#808080" stroke-width="0.8"/><path d="M2.5 7H10.5M6.5 3V11" stroke="#e00000" stroke-width="1"/><circle cx="6.5" cy="7" r="2.5" fill="none" stroke="#e00000" stroke-width="1"/></svg>
<svg class="a" style="left:222px;top:111px" width="16" height="16" viewBox="0 0 16 16"><circle cx="6.5" cy="7" r="5" fill="#fff" stroke="#000" stroke-width="1.1"/><path d="M10 10.5 L14 14.5" stroke="#000" stroke-width="2.6"/><path d="M10.5 10.3 L13.8 13.6" stroke="#808080" stroke-width="0.8"/><path d="M4 7H9" stroke="#e00000" stroke-width="1.3"/></svg>
<svg class="a" style="left:264px;top:111px" width="20" height="17" viewBox="0 0 20 17"><path d="M1 1.5H19M1 15.5H19" stroke="#000" stroke-width="1.2"/><path d="M10 2V5M10 12V15M8 4L10 2L12 4M8 13L10 15L12 13" stroke="#000" fill="none"/><text x="10" y="10.8" font-family="Liberation Sans" font-weight="bold" font-size="8" fill="#a00000" text-anchor="middle" textLength="17" lengthAdjust="spacingAndGlyphs">FULL</text></svg>
<svg class="a" style="left:294px;top:113px" width="15" height="15" viewBox="0 0 15 15"><path d="M1 2.5H14M1 11.5H14" stroke="#000" stroke-width="1.1"/><path d="M7.5 0V3M7.5 11V14" stroke="#000"/><text x="7.5" y="9.6" font-family="Liberation Sans" font-weight="bold" font-size="7" fill="#a00000" text-anchor="middle" textLength="12" lengthAdjust="spacingAndGlyphs">P.S.</text></svg>
<svg class="a" style="left:321px;top:113px" width="19" height="15" viewBox="0 0 19 15"><path d="M1 1.5H14M1 11.5H14" stroke="#000" stroke-width="1.2"/><path d="M13.5 1.5L17.5 -0.5V3.5ZM13.5 11.5L17.5 9.5V13.5Z" fill="#000"/><path d="M16 1.5H19M16 11.5H19" stroke="#000" stroke-width="1"/><text x="7.5" y="9.4" font-family="Liberation Sans" font-weight="bold" font-size="8" fill="#a00000" text-anchor="middle" textLength="14" lengthAdjust="spacingAndGlyphs">SET</text></svg>
<div class="vv" style="left:1169px;top:112px;letter-spacing:0.4px">V2-V1=</div>
<div class="vv" style="left:1224px;top:112px;letter-spacing:-0.3px">0.000</div>
<div class="vv" style="left:1261px;top:112px;letter-spacing:0.4px">Volts</div>
<div class="chh" style="left:62px;top:289px">Channel 2</div>
<div class="a" style="left:56px;top:305px;width:6px;height:1px;background:#a09a70"></div>
<div class="a" style="left:170px;top:305px;width:6px;height:1px;background:#a09a70"></div>
<div class="a" style="left:195px;top:305px;width:4px;height:1px;background:#a09a70"></div>
<div class="a" style="left:218px;top:305px;width:4px;height:1px;background:#a09a70"></div>
<div class="a" style="left:242px;top:305px;width:20px;height:1px;background:#a09a70"></div>
<div class="a" style="left:285px;top:305px;width:8px;height:1px;background:#a09a70"></div>
<div class="a" style="left:312px;top:305px;width:6px;height:1px;background:#a09a70"></div>
<div class="a" style="left:342px;top:305px;width:774px;height:1px;background:#a09a70"></div>
<svg class="a" style="left:176px;top:288px" width="16" height="16" viewBox="0 0 16 16"><circle cx="6.5" cy="7" r="5" fill="#fff" stroke="#000" stroke-width="1.1"/><path d="M10 10.5 L14 14.5" stroke="#000" stroke-width="2.6"/><path d="M10.5 10.3 L13.8 13.6" stroke="#808080" stroke-width="0.8"/><path d="M4 7H9M6.5 4.5V9.5" stroke="#e00000" stroke-width="1.3"/></svg>
<svg class="a" style="left:199px;top:288px" width="16" height="16" viewBox="0 0 16 16"><circle cx="6.5" cy="7" r="5" fill="#fff" stroke="#000" stroke-width="1.1"/><path d="M10 10.5 L14 14.5" stroke="#000" stroke-width="2.6"/><path d="M10.5 10.3 L13.8 13.6" stroke="#808080" stroke-width="0.8"/><path d="M2.5 7H10.5M6.5 3V11" stroke="#e00000" stroke-width="1"/><circle cx="6.5" cy="7" r="2.5" fill="none" stroke="#e00000" stroke-width="1"/></svg>
<svg class="a" style="left:222px;top:288px" width="16" height="16" viewBox="0 0 16 16"><circle cx="6.5" cy="7" r="5" fill="#fff" stroke="#000" stroke-width="1.1"/><path d="M10 10.5 L14 14.5" stroke="#000" stroke-width="2.6"/><path d="M10.5 10.3 L13.8 13.6" stroke="#808080" stroke-width="0.8"/><path d="M4 7H9" stroke="#e00000" stroke-width="1.3"/></svg>
<svg class="a" style="left:264px;top:288px" width="20" height="17" viewBox="0 0 20 17"><path d="M1 1.5H19M1 15.5H19" stroke="#000" stroke-width="1.2"/><path d="M10 2V5M10 12V15M8 4L10 2L12 4M8 13L10 15L12 13" stroke="#000" fill="none"/><text x="10" y="10.8" font-family="Liberation Sans" font-weight="bold" font-size="8" fill="#a00000" text-anchor="middle" textLength="17" lengthAdjust="spacingAndGlyphs">FULL</text></svg>
<svg class="a" style="left:294px;top:290px" width="15" height="15" viewBox="0 0 15 15"><path d="M1 2.5H14M1 11.5H14" stroke="#000" stroke-width="1.1"/><path d="M7.5 0V3M7.5 11V14" stroke="#000"/><text x="7.5" y="9.6" font-family="Liberation Sans" font-weight="bold" font-size="7" fill="#a00000" text-anchor="middle" textLength="12" lengthAdjust="spacingAndGlyphs">P.S.</text></svg>
<svg class="a" style="left:321px;top:290px" width="19" height="15" viewBox="0 0 19 15"><path d="M1 1.5H14M1 11.5H14" stroke="#000" stroke-width="1.2"/><path d="M13.5 1.5L17.5 -0.5V3.5ZM13.5 11.5L17.5 9.5V13.5Z" fill="#000"/><path d="M16 1.5H19M16 11.5H19" stroke="#000" stroke-width="1"/><text x="7.5" y="9.4" font-family="Liberation Sans" font-weight="bold" font-size="8" fill="#a00000" text-anchor="middle" textLength="14" lengthAdjust="spacingAndGlyphs">SET</text></svg>
<div class="vv" style="left:1169px;top:289px;letter-spacing:0.4px">V2-V1=</div>
<div class="vv" style="left:1224px;top:289px;letter-spacing:-0.3px">0.000</div>
<div class="vv" style="left:1261px;top:289px;letter-spacing:0.4px">Volts</div>
<div class="chh" style="left:62px;top:467px">Channel 3</div>
<div class="a" style="left:56px;top:483px;width:6px;height:1px;background:#a09a70"></div>
<div class="a" style="left:170px;top:483px;width:6px;height:1px;background:#a09a70"></div>
<div class="a" style="left:195px;top:483px;width:4px;height:1px;background:#a09a70"></div>
<div class="a" style="left:218px;top:483px;width:4px;height:1px;background:#a09a70"></div>
<div class="a" style="left:242px;top:483px;width:20px;height:1px;background:#a09a70"></div>
<div class="a" style="left:285px;top:483px;width:8px;height:1px;background:#a09a70"></div>
<div class="a" style="left:312px;top:483px;width:6px;height:1px;background:#a09a70"></div>
<div class="a" style="left:342px;top:483px;width:774px;height:1px;background:#a09a70"></div>
<svg class="a" style="left:176px;top:466px" width="16" height="16" viewBox="0 0 16 16"><circle cx="6.5" cy="7" r="5" fill="#fff" stroke="#000" stroke-width="1.1"/><path d="M10 10.5 L14 14.5" stroke="#000" stroke-width="2.6"/><path d="M10.5 10.3 L13.8 13.6" stroke="#808080" stroke-width="0.8"/><path d="M4 7H9M6.5 4.5V9.5" stroke="#e00000" stroke-width="1.3"/></svg>
<svg class="a" style="left:199px;top:466px" width="16" height="16" viewBox="0 0 16 16"><circle cx="6.5" cy="7" r="5" fill="#fff" stroke="#000" stroke-width="1.1"/><path d="M10 10.5 L14 14.5" stroke="#000" stroke-width="2.6"/><path d="M10.5 10.3 L13.8 13.6" stroke="#808080" stroke-width="0.8"/><path d="M2.5 7H10.5M6.5 3V11" stroke="#e00000" stroke-width="1"/><circle cx="6.5" cy="7" r="2.5" fill="none" stroke="#e00000" stroke-width="1"/></svg>
<svg class="a" style="left:222px;top:466px" width="16" height="16" viewBox="0 0 16 16"><circle cx="6.5" cy="7" r="5" fill="#fff" stroke="#000" stroke-width="1.1"/><path d="M10 10.5 L14 14.5" stroke="#000" stroke-width="2.6"/><path d="M10.5 10.3 L13.8 13.6" stroke="#808080" stroke-width="0.8"/><path d="M4 7H9" stroke="#e00000" stroke-width="1.3"/></svg>
<svg class="a" style="left:264px;top:466px" width="20" height="17" viewBox="0 0 20 17"><path d="M1 1.5H19M1 15.5H19" stroke="#000" stroke-width="1.2"/><path d="M10 2V5M10 12V15M8 4L10 2L12 4M8 13L10 15L12 13" stroke="#000" fill="none"/><text x="10" y="10.8" font-family="Liberation Sans" font-weight="bold" font-size="8" fill="#a00000" text-anchor="middle" textLength="17" lengthAdjust="spacingAndGlyphs">FULL</text></svg>
<svg class="a" style="left:294px;top:468px" width="15" height="15" viewBox="0 0 15 15"><path d="M1 2.5H14M1 11.5H14" stroke="#000" stroke-width="1.1"/><path d="M7.5 0V3M7.5 11V14" stroke="#000"/><text x="7.5" y="9.6" font-family="Liberation Sans" font-weight="bold" font-size="7" fill="#a00000" text-anchor="middle" textLength="12" lengthAdjust="spacingAndGlyphs">P.S.</text></svg>
<svg class="a" style="left:321px;top:468px" width="19" height="15" viewBox="0 0 19 15"><path d="M1 1.5H14M1 11.5H14" stroke="#000" stroke-width="1.2"/><path d="M13.5 1.5L17.5 -0.5V3.5ZM13.5 11.5L17.5 9.5V13.5Z" fill="#000"/><path d="M16 1.5H19M16 11.5H19" stroke="#000" stroke-width="1"/><text x="7.5" y="9.4" font-family="Liberation Sans" font-weight="bold" font-size="8" fill="#a00000" text-anchor="middle" textLength="14" lengthAdjust="spacingAndGlyphs">SET</text></svg>
<div class="vv" style="left:1169px;top:467px;letter-spacing:0.4px">V2-V1=</div>
<div class="vv" style="left:1224px;top:467px;letter-spacing:-0.3px">0.000</div>
<div class="vv" style="left:1261px;top:467px;letter-spacing:0.4px">Volts</div>
<div class="ylab" style="left:15px;top:124px">0.1</div>
<div class="ylab" style="left:15px;top:204px">0</div>
<div class="ylab" style="left:15px;top:284px">-0.1</div>
<div class="ylab" style="left:15px;top:301px">0.1</div>
<div class="ylab" style="left:15px;top:381px">0</div>
<div class="ylab" style="left:15px;top:462px">-0.1</div>
<div class="ylab" style="left:15px;top:479px">0.1</div>
<div class="ylab" style="left:15px;top:562px">0</div>
<div class="ylab" style="left:15px;top:646px">-0.1</div>
<div class="a" style="left:1344px;top:195px;width:15px;height:14px;background:#ece9d8;border-top:1px solid #fff;border-left:1px solid #fff;border-right:1px solid #716f64;border-bottom:1px solid #716f64;box-shadow:inset -1px -1px 0 #aca899"><div class="a" style="left:3px;top:4px;border-left:3.5px solid transparent;border-right:3.5px solid transparent;border-bottom:4px solid #000"></div></div>
<div class="a" style="left:1344px;top:209px;width:15px;height:15px;background:#ece9d8;border-top:1px solid #fff;border-left:1px solid #fff;border-right:1px solid #716f64;border-bottom:1px solid #716f64;box-shadow:inset -1px -1px 0 #aca899"><div class="a" style="left:3px;top:5px;border-left:3.5px solid transparent;border-right:3.5px solid transparent;border-top:4px solid #000"></div></div>
<div class="a" style="left:1337px;top:206px;width:3px;height:6px;background:#0000ff"></div>
<div class="a" style="left:1344px;top:372px;width:15px;height:14px;background:#ece9d8;border-top:1px solid #fff;border-left:1px solid #fff;border-right:1px solid #716f64;border-bottom:1px solid #716f64;box-shadow:inset -1px -1px 0 #aca899"><div class="a" style="left:3px;top:4px;border-left:3.5px solid transparent;border-right:3.5px solid transparent;border-bottom:4px solid #000"></div></div>
<div class="a" style="left:1344px;top:386px;width:15px;height:15px;background:#ece9d8;border-top:1px solid #fff;border-left:1px solid #fff;border-right:1px solid #716f64;border-bottom:1px solid #716f64;box-shadow:inset -1px -1px 0 #aca899"><div class="a" style="left:3px;top:5px;border-left:3.5px solid transparent;border-right:3.5px solid transparent;border-top:4px solid #000"></div></div>
<div class="a" style="left:1337px;top:383px;width:3px;height:6px;background:#0000ff"></div>
<div class="a" style="left:1344px;top:553px;width:15px;height:14px;background:#ece9d8;border-top:1px solid #fff;border-left:1px solid #fff;border-right:1px solid #716f64;border-bottom:1px solid #716f64;box-shadow:inset -1px -1px 0 #aca899"><div class="a" style="left:3px;top:4px;border-left:3.5px solid transparent;border-right:3.5px solid transparent;border-bottom:4px solid #000"></div></div>
<div class="a" style="left:1344px;top:567px;width:15px;height:15px;background:#ece9d8;border-top:1px solid #fff;border-left:1px solid #fff;border-right:1px solid #716f64;border-bottom:1px solid #716f64;box-shadow:inset -1px -1px 0 #aca899"><div class="a" style="left:3px;top:5px;border-left:3.5px solid transparent;border-right:3.5px solid transparent;border-top:4px solid #000"></div></div>
<div class="a" style="left:1337px;top:564px;width:3px;height:6px;background:#0000ff"></div>
<svg class="a" style="left:1344px;top:292px" width="16" height="9"><path d="M1 4 L15 0 V8 Z" fill="#a00000"/></svg>
<svg class="a" style="left:1344px;top:470px" width="16" height="9"><path d="M1 4 L15 0 V8 Z" fill="#a00000"/></svg>
<svg class="a" style="left:0;top:650px" width="1366" height="10"><rect x="56" y="1" width="1" height="8" fill="#000"/><rect x="120" y="1" width="1" height="4" fill="#000"/><rect x="184" y="1" width="1" height="4" fill="#000"/><rect x="248" y="1" width="1" height="4" fill="#000"/><rect x="312" y="1" width="1" height="4" fill="#000"/><rect x="376" y="1" width="1" height="8" fill="#000"/><rect x="441" y="1" width="1" height="4" fill="#000"/><rect x="505" y="1" width="1" height="4" fill="#000"/><rect x="569" y="1" width="1" height="4" fill="#000"/><rect x="633" y="1" width="1" height="4" fill="#000"/><rect x="697" y="1" width="1" height="8" fill="#000"/><rect x="761" y="1" width="1" height="4" fill="#000"/><rect x="825" y="1" width="1" height="4" fill="#000"/><rect x="889" y="1" width="1" height="4" fill="#000"/><rect x="953" y="1" width="1" height="4" fill="#000"/><rect x="1018" y="1" width="1" height="8" fill="#000"/><rect x="1082" y="1" width="1" height="4" fill="#000"/><rect x="1146" y="1" width="1" height="4" fill="#000"/><rect x="1210" y="1" width="1" height="4" fill="#000"/><rect x="1274" y="1" width="1" height="4" fill="#000"/><rect x="1338" y="1" width="1" height="8" fill="#000"/></svg>
<svg class="a" style="left:0;top:290px" width="1366" height="8"><rect x="56" y="0" width="1" height="7" fill="#000"/><rect x="248" y="0" width="1" height="4" fill="#000"/><rect x="376" y="0" width="1" height="7" fill="#000"/><rect x="441" y="0" width="1" height="4" fill="#000"/><rect x="505" y="0" width="1" height="4" fill="#000"/><rect x="569" y="0" width="1" height="4" fill="#000"/><rect x="633" y="0" width="1" height="4" fill="#000"/><rect x="697" y="0" width="1" height="7" fill="#000"/><rect x="761" y="0" width="1" height="4" fill="#000"/><rect x="825" y="0" width="1" height="4" fill="#000"/><rect x="889" y="0" width="1" height="4" fill="#000"/><rect x="953" y="0" width="1" height="4" fill="#000"/><rect x="1018" y="0" width="1" height="7" fill="#000"/><rect x="1082" y="0" width="1" height="4" fill="#000"/></svg>
<svg class="a" style="left:0;top:467px" width="1366" height="8"><rect x="56" y="0" width="1" height="7" fill="#000"/><rect x="248" y="0" width="1" height="4" fill="#000"/><rect x="376" y="0" width="1" height="7" fill="#000"/><rect x="441" y="0" width="1" height="4" fill="#000"/><rect x="505" y="0" width="1" height="4" fill="#000"/><rect x="569" y="0" width="1" height="4" fill="#000"/><rect x="633" y="0" width="1" height="4" fill="#000"/><rect x="697" y="0" width="1" height="7" fill="#000"/><rect x="761" y="0" width="1" height="4" fill="#000"/><rect x="825" y="0" width="1" height="4" fill="#000"/><rect x="889" y="0" width="1" height="4" fill="#000"/><rect x="953" y="0" width="1" height="4" fill="#000"/><rect x="1018" y="0" width="1" height="7" fill="#000"/><rect x="1082" y="0" width="1" height="4" fill="#000"/></svg>

<!-- time axis labels -->
<div class="t" style="left:22px;top:688px;font-size:11px;letter-spacing:-0.35px">123:17:1.156</div>
<div class="t" style="left:339px;top:688px;font-size:11px;letter-spacing:-0.35px">123:17:31.156</div>
<div class="t" style="left:663px;top:688px;font-size:11px;letter-spacing:-0.35px">123:18:1.156</div>
<div class="t" style="left:982px;top:688px;font-size:11px;letter-spacing:-0.35px">123:18:31.156</div>
<div class="t" style="left:1305px;top:688px;font-size:11px;letter-spacing:-0.35px">123:19:1.156</div>

<!-- horizontal scrollbar -->
<div class="a" style="left:54px;top:702px;width:1273px;height:14px;background-color:#ece9d8;background-image:conic-gradient(#fcfcfa 25%,transparent 0 50%,#fcfcfa 0 75%,transparent 0);background-size:2px 2px"></div>
<div class="a" style="left:37px;top:702px;width:17px;height:14px;background:#ece9d8;border-top:1px solid #fff;border-left:1px solid #fff;border-right:1px solid #716f64;border-bottom:1px solid #716f64"><div class="a" style="left:5px;top:3px;width:0;height:0;border-top:3px solid transparent;border-bottom:3px solid transparent;border-right:3px solid #000"></div></div>
<div class="a" style="left:1304px;top:702px;width:17px;height:14px;background:#ece9d8;border-top:1px solid #fff;border-left:1px solid #fff;border-right:1px solid #716f64;border-bottom:1px solid #716f64"></div>
<div class="a" style="left:1327px;top:702px;width:17px;height:14px;background:#ece9d8;border-top:1px solid #fff;border-left:1px solid #fff;border-right:1px solid #716f64;border-bottom:1px solid #716f64"><div class="a" style="left:6px;top:3px;width:0;height:0;border-top:3px solid transparent;border-bottom:3px solid transparent;border-left:3px solid #000"></div></div>

<!-- status bar -->
<div class="a" style="left:0;top:719px;width:1366px;height:19px;background:#ece9d8"></div>
<div class="t" style="left:3px;top:723px;letter-spacing:-0.3px">For Help, press F1</div>
<div class="a" style="left:802px;top:721px;width:462px;height:17px;border-top:1px solid #aca899;border-left:1px solid #aca899"></div>
<div class="a" style="left:1266px;top:721px;width:30px;height:17px;border-top:1px solid #aca899;border-left:1px solid #aca899"></div>
<div class="a" style="left:1298px;top:721px;width:32px;height:17px;border-top:1px solid #aca899;border-left:1px solid #aca899"></div>
<div class="a" style="left:1331px;top:721px;width:35px;height:17px;border-top:1px solid #aca899;border-left:1px solid #aca899"></div>


<div class="a" style="left:0;top:737px;width:1366px;height:1px;background:#f4f6fc"></div><div class="a" style="left:0;top:738px;width:1366px;height:30px;background:linear-gradient(#2a5cc0 0,#2a5cc0 0.8px,#4a90ee 1.5px,#4a90ee 2.5px,#2d6ad8 4px,#2156d6 6px,#2258d8 12px,#2563de 22px,#2460dc 26px,#1c48b8 29px,#1941a5 30px)"></div>
<div class="a" style="left:0;top:738px;width:110px;height:28px;border-radius:0 14px 14px 0 / 0 14px 14px 0;background:linear-gradient(#3c9a3c 0,#6cc86c 3px,#3ea33e 8px,#379437 22px,#2d7d2d 30px);box-shadow:inset -2px 0 3px #1d5a1d"></div>
<svg class="a" style="left:8px;top:743px" width="22" height="20" viewBox="0 0 22 20"><path d="M2 4 Q5 2 10 4 L9 10 Q5 8 1 10Z" fill="#f05020"/><path d="M11 4 Q15 6 20 4 L19 10 Q15 11 10 10Z" fill="#60c030"/><path d="M1 11 Q5 9 9 11 L8 17 Q4 15 0 17Z" fill="#3070f0"/><path d="M10 11 Q14 12 19 11 L18 17 Q14 18 9 17Z" fill="#f0c020"/></svg>
<svg class="a" style="left:0;top:0" width="110" height="768"><path d="M40 747.5H48.6L37 758.3M43.8 753.8L47.1 758.3 M56.7 746.7L50.5 753.3M55.7 748.8H61.4L50.5 758.3M52.4 751.5L59.5 754.8 M63.3 751.4H74.8 M83.3 746.7L79 758.1M82.4 751L86.7 753.3" transform="translate(1,1)" stroke="#1a4a1a" stroke-opacity="0.6" stroke-width="1.8" fill="none" stroke-linecap="square"/><path d="M40 747.5H48.6L37 758.3M43.8 753.8L47.1 758.3 M56.7 746.7L50.5 753.3M55.7 748.8H61.4L50.5 758.3M52.4 751.5L59.5 754.8 M63.3 751.4H74.8 M83.3 746.7L79 758.1M82.4 751L86.7 753.3" stroke="#fff" stroke-width="2.2" fill="none" stroke-linecap="square"/></svg>
<div class="a" style="left:120px;top:741px;width:158px;height:25px;border-radius:3px;background:linear-gradient(#5a9af8,#3c80f4 20%,#3a7cf0 80%,#2a64d8);border:1px solid #1c4cc0"></div>
<svg class="a" style="left:129px;top:747px" width="18" height="12"><ellipse cx="9" cy="7" rx="8" ry="4" fill="#d0d0d0" stroke="#606060"/><rect x="2" y="4" width="14" height="3" fill="#e8e8e8"/></svg>
<div class="t" style="left:149px;top:747px;color:#fff;font-size:12px;letter-spacing:-0.4px">USB DISK (F:)</div>
<div class="a" style="left:280px;top:741px;width:158px;height:25px;border-radius:3px;background:linear-gradient(#1a44b0,#1e4ec0 20%,#1e50c8 80%,#2454c8);border:1px solid #1a3c9c"></div>
<svg class="a" style="left:290px;top:746px" width="16" height="15" viewBox="0 0 17 17"><rect width="17" height="17" fill="#fff"/><rect y="3" width="17" height="2" fill="#000"/><rect y="7" width="17" height="2" fill="#222"/><rect y="11" width="17" height="2" fill="#555"/><path d="M1 15 C4 14 4 3 7 4 C9 5 8 13 11 12 C13 11 13 3 16 2" stroke="#d01010" stroke-width="1.6" fill="none"/></svg>
<div class="t" style="left:309px;top:747px;color:#fff;font-size:12px;letter-spacing:-0.82px">09210705_09261102 -...</div>
<!-- IME icons -->
<svg class="a" style="left:990px;top:744px" width="18" height="17"><path d="M9 4V1.5H14" stroke="#000" fill="none"/><rect x="1.5" y="4.5" width="15" height="10" fill="#000"/><rect x="2.5" y="5.5" width="13" height="8" fill="#fff"/><path d="M3 7.5H15M3 9.5H15M3 11.5H15" stroke="#000" stroke-dasharray="1 1"/></svg>
<svg class="a" style="left:1010px;top:743px" width="19" height="18"><circle cx="7.5" cy="7.5" r="6.5" fill="#e01020"/><circle cx="5.5" cy="5" r="2" fill="#ff8090"/><path d="M15 2V10L13 16" stroke="#f0c040" stroke-width="2" fill="none"/><path d="M11 10L14 17" stroke="#000" stroke-width="2"/><path d="M13 11L15 16" stroke="#fff" stroke-width="1"/></svg>
<svg class="a" style="left:1039px;top:745px" width="10" height="15"><path d="M1 14L4.5 1.5L8 14M2.5 9.5H6.5" stroke="#fff" stroke-width="1.2" fill="none"/></svg>
<svg class="a" style="left:1050px;top:744px" width="18" height="17"><path d="M4.5 1V3M2.5 3.5H7.5V15M2.5 3.5V12L1 15M2.5 7.5H7.5M2.5 10.5H7.5M4.5 5V6M4.5 8.5V9.5M10.5 2.5V6.5L9 8M10.5 2.5H14.5V6.5L16 7.5M9.5 9.5H15L11 15M11 10.5L16 15" stroke="#fff" stroke-width="1" fill="none"/></svg>
<svg class="a" style="left:1070px;top:744px" width="17" height="17"><path d="M1 9 Q1 16 7 16 Q13 16 13 9Z" fill="#f0e070" stroke="#404040"/><ellipse cx="7" cy="9" rx="6" ry="2" fill="#fff" stroke="#404040"/><path d="M4 8L6 2L8 8" fill="#d02020"/><circle cx="12" cy="5" r="3.5" fill="#d0d8e0" stroke="#404040"/><path d="M10 11L13 9" stroke="#404040" stroke-width="1.5"/></svg>
<svg class="a" style="left:1091px;top:745px" width="17" height="15"><path d="M1.5 7 L10 2.5 L15.5 5 V10 L7 14 L1.5 12Z" fill="#e8a8b8" stroke="#404040"/><path d="M1.5 7 L7 9.5 L15.5 5M7 9.5V14" stroke="#404040" fill="none"/><path d="M6 4.5 Q9 1.5 11 3.5" stroke="#202020" stroke-width="1.5" fill="none"/></svg>
<svg class="a" style="left:1114px;top:745px" width="15" height="16"><path d="M1.5 1.5H12.5V12.5H8.5L6.5 14.5V12.5H1.5Z" fill="#ffffe0" stroke="#000" stroke-width="1.4"/><text x="7" y="10.5" font-family="Liberation Sans" font-weight="bold" font-size="10" text-anchor="middle">?</text></svg>
<div class="t" style="left:1137px;top:743px;color:#fff;font-size:7px;font-weight:bold;letter-spacing:0.3px">CAPS</div>
<div class="t" style="left:1137px;top:755px;color:#fff;font-size:7px;font-weight:bold;letter-spacing:0.3px">KANA</div>
<svg class="a" style="left:1162px;top:743px" width="11" height="8"><path d="M3.5 0.5H9.5V4.5H7.5M1.5 2.5H7.5V6.5H1.5Z" stroke="#fff" stroke-width="1" fill="none"/><path d="M3.5 1H9.5M1.5 3H7.5" stroke="#fff" stroke-width="1.2"/></svg>
<div class="a" style="left:1163px;top:757px;border-left:3px solid transparent;border-right:3px solid transparent;border-top:4px solid #fff"></div>
<!-- tray -->
<div class="a" style="left:1257px;top:738px;width:109px;height:30px;background:linear-gradient(#1290e8 0,#22a8f0 2px,#0f94e8 5px,#0c8be0 25px,#0a6cc8 30px);border-left:1px solid #0d3d9c"></div>
<div class="a" style="left:1250px;top:744px;width:18px;height:18px;border-radius:50%;background:#3c80e0;border:1px solid #fff"></div>
<div class="t" style="left:1254px;top:747px;color:#fff;font-size:12px;font-weight:bold">&lt;</div>
<svg class="a" style="left:1268px;top:744px" width="20" height="18"><rect x="2" y="3" width="10" height="8" fill="#c0c0e0" stroke="#404080"/><path d="M9 9 L16 16 M16 9 L9 16" stroke="#e02020" stroke-width="2"/></svg>
<svg class="a" style="left:1286px;top:744px" width="20" height="18"><rect x="2" y="3" width="10" height="8" fill="#c0c0e0" stroke="#404080"/><path d="M9 9 L16 16 M16 9 L9 16" stroke="#e02020" stroke-width="2"/></svg>
<svg class="a" style="left:1304px;top:744px" width="18" height="16"><rect x="1" y="1" width="15" height="11" fill="#203060" stroke="#000"/><path d="M4 9 L7 4 L10 8 L13 3" stroke="#fff" fill="none"/><rect x="5" y="13" width="8" height="2" fill="#000"/></svg>
<div class="t" style="left:1326px;top:747px;color:#fff;font-size:12px;letter-spacing:-0.5px">14:44</div>

</body></html>
